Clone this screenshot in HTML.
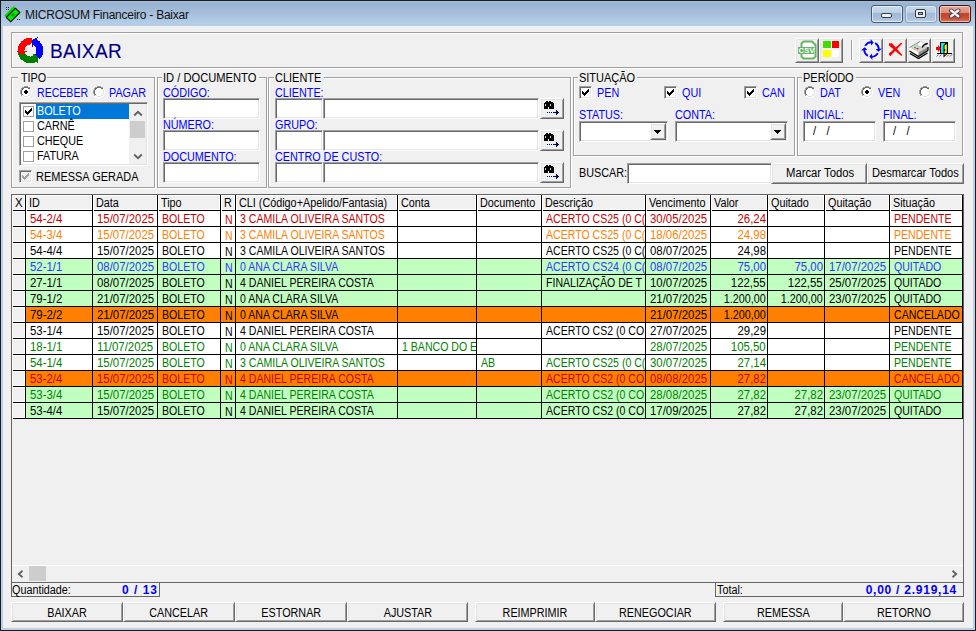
<!DOCTYPE html><html><head><meta charset="utf-8"><style>
*{box-sizing:border-box}
html,body{margin:0;padding:0}
body{width:976px;height:631px;overflow:hidden;position:relative;background:#f0f0f0;font-family:"Liberation Sans",sans-serif;font-size:11px;color:#000}
.a{position:absolute}
.t{position:absolute;white-space:nowrap;line-height:13px;font-size:12px}
.bl{color:#0000ff}
</style></head><body>
<div class="a " style="left:0px;top:0px;width:976px;height:631px;background:#b9d1ea;border:1px solid #1c1c1c"></div>
<div class="a " style="left:1px;top:1px;width:974px;height:25px;background:linear-gradient(to bottom,#a7bedb 0px,#99b4d3 2px,#9cb6d5 6px,#b9d1ea 25px)"></div>
<div class="a " style="left:3px;top:26px;width:970px;height:602px;background:#f0f0f0"></div>
<svg class="a" style="left:4px;top:5px" width="17" height="18" viewBox="0 0 17 18">
<g transform="rotate(-45 9 9.5)"><rect x="2.2" y="4.2" width="13" height="3" fill="#00c800"/><rect x="2.2" y="6.8" width="13" height="6.2" fill="#00ee00" stroke="#000" stroke-width="1.1"/>
<rect x="7" y="8.6" width="3.5" height="2.6" fill="#00a000"/><path d="M2.2 4.6 H15.2" stroke="#00ff00" stroke-width="0.8"/></g>
<rect x="2" y="2" width="1" height="1" fill="#222"/><rect x="4" y="2" width="1" height="1" fill="#222"/><rect x="2" y="4" width="1" height="1" fill="#222"/><rect x="4" y="4" width="1" height="1" fill="#222"/>
<rect x="13" y="14" width="1" height="1" fill="#222"/><rect x="15" y="14" width="1" height="1" fill="#222"/>
</svg>
<div class="t" style="left:25px;top:7px;font-size:12px;line-height:16px;color:#111;letter-spacing:-0.25px">MICROSUM Financeiro - Baixar</div>
<div class="a" style="left:871px;top:5px;width:32px;height:18px;border:1px solid #4b5a6e;border-radius:3px;background:linear-gradient(to bottom,#cadcee 0%,#bcd1e8 40%,#9fb7d2 45%,#a9c1dc 80%,#bcd3ea 100%);box-shadow:inset 0 0 0 1px rgba(255,255,255,0.55)"></div>
<div class="a" style="left:881px;top:13px;width:11px;height:5px;border:1px solid #333c48;border-radius:2px;background:#f4f4f4"></div>
<div class="a" style="left:905px;top:5px;width:32px;height:18px;border:1px solid #8aa0bb;border-radius:3px;background:linear-gradient(to bottom,#c5d8ec 0%,#bad0e8 40%,#a2bad5 45%,#adc4de 80%,#bdd3ea 100%);box-shadow:inset 0 0 0 1px rgba(255,255,255,0.45)"></div>
<div class="a" style="left:915px;top:9px;width:11px;height:9px;border:1px solid #333c48;border-radius:2px;background:#eeeeee"></div>
<div class="a" style="left:918px;top:12px;width:5px;height:3px;border:1px solid #333c48;background:#9fb7d4"></div>
<div class="a" style="left:939px;top:5px;width:32px;height:18px;border:1px solid #4a1414;border-radius:3px;background:linear-gradient(to bottom,#e9a899 0%,#dc8c7c 42%,#c0442c 47%,#c54f36 75%,#d87a62 100%);box-shadow:inset 0 0 0 1px rgba(255,230,220,0.6)"></div>
<svg class="a" style="left:948px;top:8px" width="14" height="11" viewBox="0 0 14 11"><path d="M3.2 2.6 L10.3 8.2 M10.3 2.6 L3.2 8.2" stroke="#3a3a4a" stroke-width="4.2" stroke-linecap="round"/><path d="M3.2 2.6 L10.3 8.2 M10.3 2.6 L3.2 8.2" stroke="#f2f2f2" stroke-width="2.5" stroke-linecap="round"/></svg>

<div class="a " style="left:12px;top:33px;width:952px;height:36px;border:1px solid #fff"></div>
<div class="a " style="left:11px;top:32px;width:952px;height:36px;border:1px solid #a0a0a0"></div>
<svg class="a" style="left:14px;top:34px" width="32" height="32" viewBox="14 34 32 32" shape-rendering="crispEdges"><path d="M17.7 50.5 A12.8 12.8 0 0 0 36.9 61.59 L33.5 55.7 A6.0 6.0 0 0 1 24.5 50.5 Z" fill="#008000"/><polygon points="32.25,53.53 38.25,63.92 38.56,55.53" fill="#008000"/><path d="M40.01 59.06 A12.8 12.8 0 0 0 36.9 39.41 L33.5 45.3 A6.0 6.0 0 0 1 34.96 54.51 Z" fill="#0000ff"/><polygon points="32.5,47.04 38.25,37.08 30.84,40.76" fill="#0000ff"/><path d="M32.28 37.82 A12.8 12.8 0 0 0 17.7 50.5 L24.5 50.5 A6.0 6.0 0 0 1 31.34 44.56 Z" fill="#ff0000"/><polygon points="28.0,50.5 14.7,50.5 22.35,54.65" fill="#ff0000"/></svg>
<div class="t" style="left:50px;top:39px;font-size:19.5px;line-height:24px;color:#000080;-webkit-text-stroke:0.1px #000080;letter-spacing:0.4px;transform:scaleX(0.975);transform-origin:0 0">BAIXAR</div>
<div class="a " style="left:795px;top:38px;width:24px;height:25px;background:#f0f0f0;border-style:solid;border-width:1px;border-color:#fff #696969 #696969 #fff;box-shadow:inset 1px 1px 0 #e3e3e3, inset -1px -1px 0 #a0a0a0;"><svg class="a" style="left:-1px;top:-1px" width="24" height="24" viewBox="0 0 24 24"><path d="M8.5 3.5 H17 L20.5 7 V18.5 L18.5 20.5 H8.5 L6.5 18.5 V5.5 Z" fill="#fff" stroke="#66b666" stroke-width="2"/><rect x="3" y="9" width="16" height="7" fill="#66b666"/><text x="3.6" y="15" font-family="Liberation Sans" font-weight="bold" font-size="7.6" fill="#fff" letter-spacing="0.2">CSV</text></svg></div>
<div class="a " style="left:819px;top:38px;width:24px;height:25px;background:#f0f0f0;border-style:solid;border-width:1px;border-color:#fff #696969 #696969 #fff;box-shadow:inset 1px 1px 0 #e3e3e3, inset -1px -1px 0 #a0a0a0;"><div class="a" style="left:3px;top:2px;width:8px;height:7px;background:#44dd00"></div><div class="a" style="left:12px;top:2px;width:7px;height:7px;background:#ff0000"></div><div class="a" style="left:3px;top:11px;width:8px;height:7px;background:#ffff00"></div><div class="a" style="left:12px;top:11px;width:7px;height:7px;background:#fff"></div></div>
<div class="a " style="left:851px;top:40px;width:1px;height:20px;background:#a0a0a0"></div>
<div class="a " style="left:852px;top:40px;width:1px;height:20px;background:#fff"></div>
<div class="a " style="left:859px;top:38px;width:24px;height:25px;background:#f0f0f0;border-style:solid;border-width:1px;border-color:#fff #696969 #696969 #fff;box-shadow:inset 1px 1px 0 #e3e3e3, inset -1px -1px 0 #a0a0a0;"><svg class="a" style="left:-1px;top:-1px" width="24" height="24" viewBox="0 0 24 24"><path d="M6.18 7.85 A7.3 7.3 0 0 1 12.25 4.2" fill="none" stroke="#0000ff" stroke-width="1.9"/><polygon points="12.14,7.42 11.58,1.04 14.63,4.52" fill="#0000ff"/><path d="M16.15 5.18 A7.3 7.3 0 0 1 19.8 11.25" fill="none" stroke="#0000ff" stroke-width="1.9"/><polygon points="16.58,11.14 22.96,10.58 19.48,13.63" fill="#0000ff"/><path d="M18.82 15.15 A7.3 7.3 0 0 1 12.75 18.8" fill="none" stroke="#0000ff" stroke-width="1.9"/><polygon points="12.86,15.58 13.42,21.96 10.37,18.48" fill="#0000ff"/><path d="M8.85 17.82 A7.3 7.3 0 0 1 5.2 11.75" fill="none" stroke="#0000ff" stroke-width="1.9"/><polygon points="8.42,11.86 2.04,12.42 5.52,9.37" fill="#0000ff"/></svg></div>
<div class="a " style="left:883px;top:38px;width:24px;height:25px;background:#f0f0f0;border-style:solid;border-width:1px;border-color:#fff #696969 #696969 #fff;box-shadow:inset 1px 1px 0 #e3e3e3, inset -1px -1px 0 #a0a0a0;"><svg class="a" style="left:-1px;top:-1px" width="24" height="24" viewBox="0 0 24 24"><polygon points="6,5.2 9,5.2 19.3,16.9 18.3,18 6,7.6" fill="#ff0000"/><polygon points="18,4.8 19.4,5.6 9.2,16 7.3,18.2 5.8,16.6 6,15.4" fill="#ff0000"/></svg></div>
<div class="a " style="left:907px;top:38px;width:24px;height:25px;background:#f0f0f0;border-style:solid;border-width:1px;border-color:#fff #696969 #696969 #fff;box-shadow:inset 1px 1px 0 #e3e3e3, inset -1px -1px 0 #a0a0a0;"><svg class="a" style="left:-1px;top:-1px" width="24" height="24" viewBox="0 0 24 24"><polygon points="2.5,9.5 13,3.5 21,9 11.5,14.5" fill="#cfcfcf"/><polygon points="2.5,9.5 11.5,14.5 11.5,17.5 2.5,12.5" fill="#ffffff"/><polygon points="11.5,14.5 21,9 21,12.5 11.5,18" fill="#8c8c8c"/><polygon points="10.5,5.5 13.5,3.2 18,5.5 15,9.5 10.5,7.5" fill="#fff" stroke="#b0b0b0" stroke-width="0.6"/><path d="M2.5 9.5 L13 3.5" stroke="#9a9a9a" stroke-width="1"/><path d="M15.2 9.5 Q16.5 6 20.8 5.5" fill="none" stroke="#000" stroke-width="1.3"/><path d="M2.5 13 L11.5 18.5 L21 12.5" fill="none" stroke="#000" stroke-width="1.4"/><path d="M3 15.5 L11.5 20.5 L20.5 15" fill="none" stroke="#000" stroke-width="1.4"/><path d="M21 9 L21 12.5" stroke="#000" stroke-width="1.2"/><rect x="7" y="9" width="2" height="1.2" fill="#00dd00"/><rect x="9.5" y="10" width="2" height="1.2" fill="#ee0000"/></svg></div>
<div class="a " style="left:931px;top:38px;width:24px;height:25px;background:#f0f0f0;border-style:solid;border-width:1px;border-color:#fff #696969 #696969 #fff;box-shadow:inset 1px 1px 0 #e3e3e3, inset -1px -1px 0 #a0a0a0;"><svg class="a" style="left:0px;top:-1px" width="24" height="24" viewBox="0 0 24 24"><rect x="8" y="4" width="8" height="12" fill="#000"/><rect x="9" y="5" width="4" height="10" fill="#00f0f0"/><polygon points="11.5,7 15.8,4.2 15.8,15.5 11.5,19.5" fill="#000"/><polygon points="12.5,7.6 14.8,6 14.8,15 12.5,17.6" fill="#ffff00"/><rect x="12" y="11" width="1.2" height="2" fill="#000"/><polygon points="4,9 6,9 6,7 9.3,10.5 6,14 6,12 4,12" fill="#ff0000"/><rect x="5" y="15" width="15" height="1" fill="#000"/><g stroke="#505050" stroke-width="0.9"><path d="M4.5 18.5 L6.5 16.5 M7.5 18.5 L9.5 16.5 M15 18.5 L17 16.5 M18 18.5 L20 16.5"/></g></svg></div>
<div class="a " style="left:12px;top:78px;width:144px;height:111px;border:1px solid #fff"></div>
<div class="a " style="left:11px;top:77px;width:144px;height:111px;border:1px solid #a0a0a0"></div>
<div class="a " style="left:18px;top:76px;width:29px;height:4px;background:#f0f0f0"></div>
<div class="t" style="left:21px;top:72px;transform:scaleX(0.9);transform-origin:0 0;">TIPO</div>
<svg class="a" style="left:20px;top:86px" width="12" height="12" viewBox="0 0 12 12" shape-rendering="crispEdges"><rect x="2" y="2" width="8" height="8" fill="#fff"/><rect x="4" y="1" width="4" height="10" fill="#fff"/><rect x="1" y="4" width="10" height="4" fill="#fff"/><rect x="4" y="0" width="1" height="1" fill="#a0a0a0"/><rect x="5" y="0" width="1" height="1" fill="#a0a0a0"/><rect x="6" y="0" width="1" height="1" fill="#a0a0a0"/><rect x="7" y="0" width="1" height="1" fill="#a0a0a0"/><rect x="2" y="1" width="1" height="1" fill="#a0a0a0"/><rect x="3" y="1" width="1" height="1" fill="#a0a0a0"/><rect x="4" y="1" width="1" height="1" fill="#696969"/><rect x="5" y="1" width="1" height="1" fill="#696969"/><rect x="6" y="1" width="1" height="1" fill="#696969"/><rect x="7" y="1" width="1" height="1" fill="#696969"/><rect x="8" y="1" width="1" height="1" fill="#a0a0a0"/><rect x="9" y="1" width="1" height="1" fill="#a0a0a0"/><rect x="1" y="2" width="1" height="1" fill="#a0a0a0"/><rect x="2" y="2" width="1" height="1" fill="#696969"/><rect x="3" y="2" width="1" height="1" fill="#696969"/><rect x="8" y="2" width="1" height="1" fill="#696969"/><rect x="9" y="2" width="1" height="1" fill="#696969"/><rect x="10" y="2" width="1" height="1" fill="#ffffff"/><rect x="1" y="3" width="1" height="1" fill="#a0a0a0"/><rect x="2" y="3" width="1" height="1" fill="#696969"/><rect x="9" y="3" width="1" height="1" fill="#e3e3e3"/><rect x="10" y="3" width="1" height="1" fill="#ffffff"/><rect x="0" y="4" width="1" height="1" fill="#a0a0a0"/><rect x="1" y="4" width="1" height="1" fill="#696969"/><rect x="10" y="4" width="1" height="1" fill="#e3e3e3"/><rect x="11" y="4" width="1" height="1" fill="#ffffff"/><rect x="0" y="5" width="1" height="1" fill="#a0a0a0"/><rect x="1" y="5" width="1" height="1" fill="#696969"/><rect x="10" y="5" width="1" height="1" fill="#e3e3e3"/><rect x="11" y="5" width="1" height="1" fill="#ffffff"/><rect x="0" y="6" width="1" height="1" fill="#a0a0a0"/><rect x="1" y="6" width="1" height="1" fill="#696969"/><rect x="10" y="6" width="1" height="1" fill="#e3e3e3"/><rect x="11" y="6" width="1" height="1" fill="#ffffff"/><rect x="0" y="7" width="1" height="1" fill="#a0a0a0"/><rect x="1" y="7" width="1" height="1" fill="#696969"/><rect x="10" y="7" width="1" height="1" fill="#e3e3e3"/><rect x="11" y="7" width="1" height="1" fill="#ffffff"/><rect x="1" y="8" width="1" height="1" fill="#a0a0a0"/><rect x="2" y="8" width="1" height="1" fill="#696969"/><rect x="9" y="8" width="1" height="1" fill="#e3e3e3"/><rect x="10" y="8" width="1" height="1" fill="#ffffff"/><rect x="1" y="9" width="1" height="1" fill="#a0a0a0"/><rect x="2" y="9" width="1" height="1" fill="#e3e3e3"/><rect x="3" y="9" width="1" height="1" fill="#e3e3e3"/><rect x="8" y="9" width="1" height="1" fill="#e3e3e3"/><rect x="9" y="9" width="1" height="1" fill="#e3e3e3"/><rect x="10" y="9" width="1" height="1" fill="#ffffff"/><rect x="2" y="10" width="1" height="1" fill="#ffffff"/><rect x="3" y="10" width="1" height="1" fill="#ffffff"/><rect x="4" y="10" width="1" height="1" fill="#e3e3e3"/><rect x="5" y="10" width="1" height="1" fill="#e3e3e3"/><rect x="6" y="10" width="1" height="1" fill="#e3e3e3"/><rect x="7" y="10" width="1" height="1" fill="#e3e3e3"/><rect x="8" y="10" width="1" height="1" fill="#ffffff"/><rect x="9" y="10" width="1" height="1" fill="#ffffff"/><rect x="4" y="11" width="1" height="1" fill="#ffffff"/><rect x="5" y="11" width="1" height="1" fill="#ffffff"/><rect x="6" y="11" width="1" height="1" fill="#ffffff"/><rect x="7" y="11" width="1" height="1" fill="#ffffff"/><rect x="5" y="4" width="2" height="4" fill="#000"/><rect x="4" y="5" width="4" height="2" fill="#000"/></svg>
<div class="t" style="left:37px;top:87px;transform:scaleX(0.88);transform-origin:0 0;color:#0000ff">RECEBER</div>
<svg class="a" style="left:93px;top:86px" width="12" height="12" viewBox="0 0 12 12" shape-rendering="crispEdges"><rect x="2" y="2" width="8" height="8" fill="#fff"/><rect x="4" y="1" width="4" height="10" fill="#fff"/><rect x="1" y="4" width="10" height="4" fill="#fff"/><rect x="4" y="0" width="1" height="1" fill="#a0a0a0"/><rect x="5" y="0" width="1" height="1" fill="#a0a0a0"/><rect x="6" y="0" width="1" height="1" fill="#a0a0a0"/><rect x="7" y="0" width="1" height="1" fill="#a0a0a0"/><rect x="2" y="1" width="1" height="1" fill="#a0a0a0"/><rect x="3" y="1" width="1" height="1" fill="#a0a0a0"/><rect x="4" y="1" width="1" height="1" fill="#696969"/><rect x="5" y="1" width="1" height="1" fill="#696969"/><rect x="6" y="1" width="1" height="1" fill="#696969"/><rect x="7" y="1" width="1" height="1" fill="#696969"/><rect x="8" y="1" width="1" height="1" fill="#a0a0a0"/><rect x="9" y="1" width="1" height="1" fill="#a0a0a0"/><rect x="1" y="2" width="1" height="1" fill="#a0a0a0"/><rect x="2" y="2" width="1" height="1" fill="#696969"/><rect x="3" y="2" width="1" height="1" fill="#696969"/><rect x="8" y="2" width="1" height="1" fill="#696969"/><rect x="9" y="2" width="1" height="1" fill="#696969"/><rect x="10" y="2" width="1" height="1" fill="#ffffff"/><rect x="1" y="3" width="1" height="1" fill="#a0a0a0"/><rect x="2" y="3" width="1" height="1" fill="#696969"/><rect x="9" y="3" width="1" height="1" fill="#e3e3e3"/><rect x="10" y="3" width="1" height="1" fill="#ffffff"/><rect x="0" y="4" width="1" height="1" fill="#a0a0a0"/><rect x="1" y="4" width="1" height="1" fill="#696969"/><rect x="10" y="4" width="1" height="1" fill="#e3e3e3"/><rect x="11" y="4" width="1" height="1" fill="#ffffff"/><rect x="0" y="5" width="1" height="1" fill="#a0a0a0"/><rect x="1" y="5" width="1" height="1" fill="#696969"/><rect x="10" y="5" width="1" height="1" fill="#e3e3e3"/><rect x="11" y="5" width="1" height="1" fill="#ffffff"/><rect x="0" y="6" width="1" height="1" fill="#a0a0a0"/><rect x="1" y="6" width="1" height="1" fill="#696969"/><rect x="10" y="6" width="1" height="1" fill="#e3e3e3"/><rect x="11" y="6" width="1" height="1" fill="#ffffff"/><rect x="0" y="7" width="1" height="1" fill="#a0a0a0"/><rect x="1" y="7" width="1" height="1" fill="#696969"/><rect x="10" y="7" width="1" height="1" fill="#e3e3e3"/><rect x="11" y="7" width="1" height="1" fill="#ffffff"/><rect x="1" y="8" width="1" height="1" fill="#a0a0a0"/><rect x="2" y="8" width="1" height="1" fill="#696969"/><rect x="9" y="8" width="1" height="1" fill="#e3e3e3"/><rect x="10" y="8" width="1" height="1" fill="#ffffff"/><rect x="1" y="9" width="1" height="1" fill="#a0a0a0"/><rect x="2" y="9" width="1" height="1" fill="#e3e3e3"/><rect x="3" y="9" width="1" height="1" fill="#e3e3e3"/><rect x="8" y="9" width="1" height="1" fill="#e3e3e3"/><rect x="9" y="9" width="1" height="1" fill="#e3e3e3"/><rect x="10" y="9" width="1" height="1" fill="#ffffff"/><rect x="2" y="10" width="1" height="1" fill="#ffffff"/><rect x="3" y="10" width="1" height="1" fill="#ffffff"/><rect x="4" y="10" width="1" height="1" fill="#e3e3e3"/><rect x="5" y="10" width="1" height="1" fill="#e3e3e3"/><rect x="6" y="10" width="1" height="1" fill="#e3e3e3"/><rect x="7" y="10" width="1" height="1" fill="#e3e3e3"/><rect x="8" y="10" width="1" height="1" fill="#ffffff"/><rect x="9" y="10" width="1" height="1" fill="#ffffff"/><rect x="4" y="11" width="1" height="1" fill="#ffffff"/><rect x="5" y="11" width="1" height="1" fill="#ffffff"/><rect x="6" y="11" width="1" height="1" fill="#ffffff"/><rect x="7" y="11" width="1" height="1" fill="#ffffff"/></svg>
<div class="t" style="left:109px;top:87px;transform:scaleX(0.9);transform-origin:0 0;color:#0000ff">PAGAR</div>
<div class="a " style="left:19px;top:102px;width:129px;height:64px;background:#fff;border-style:solid;border-width:1px;border-color:#a0a0a0 #fff #fff #a0a0a0;box-shadow:inset 1px 1px 0 #696969, inset -1px -1px 0 #e3e3e3"></div>
<div class="a " style="left:36px;top:104px;width:93px;height:15px;background:#0078d7"></div>
<div class="a " style="left:23px;top:106px;width:11px;height:11px;border:1px solid #a0a0a0;background:#fff"></div>
<svg class="a" style="left:25px;top:108px" width="7" height="7" viewBox="0 0 7 7" fill="#000" shape-rendering="crispEdges"><rect x="6" y="0" width="1" height="1"/><rect x="5" y="1" width="1" height="1"/><rect x="6" y="1" width="1" height="1"/><rect x="0" y="2" width="1" height="1"/><rect x="4" y="2" width="1" height="1"/><rect x="5" y="2" width="1" height="1"/><rect x="6" y="2" width="1" height="1"/><rect x="0" y="3" width="1" height="1"/><rect x="1" y="3" width="1" height="1"/><rect x="3" y="3" width="1" height="1"/><rect x="4" y="3" width="1" height="1"/><rect x="5" y="3" width="1" height="1"/><rect x="0" y="4" width="1" height="1"/><rect x="1" y="4" width="1" height="1"/><rect x="2" y="4" width="1" height="1"/><rect x="3" y="4" width="1" height="1"/><rect x="4" y="4" width="1" height="1"/><rect x="1" y="5" width="1" height="1"/><rect x="2" y="5" width="1" height="1"/><rect x="3" y="5" width="1" height="1"/><rect x="2" y="6" width="1" height="1"/></svg>
<div class="t" style="left:37px;top:105px;transform:scaleX(0.9);transform-origin:0 0;color:#fff">BOLETO</div>
<div class="a " style="left:23px;top:121px;width:11px;height:11px;border:1px solid #a0a0a0;background:#fff"></div>
<div class="t" style="left:37px;top:120px;transform:scaleX(0.9);transform-origin:0 0;color:#000">CARNÊ</div>
<div class="a " style="left:23px;top:136px;width:11px;height:11px;border:1px solid #a0a0a0;background:#fff"></div>
<div class="t" style="left:37px;top:135px;transform:scaleX(0.9);transform-origin:0 0;color:#000">CHEQUE</div>
<div class="a " style="left:23px;top:151px;width:11px;height:11px;border:1px solid #a0a0a0;background:#fff"></div>
<div class="t" style="left:37px;top:150px;transform:scaleX(0.9);transform-origin:0 0;color:#000">FATURA</div>
<div class="a " style="left:129px;top:104px;width:17px;height:60px;background:#f0f0f0"></div>
<div class="a " style="left:130px;top:121px;width:15px;height:17px;background:#cdcdcd"></div>
<svg class="a" style="left:133px;top:110px" width="10" height="7" viewBox="0 0 10 7"><path d="M1.2 5.5 L5 1.8 L8.8 5.5" fill="none" stroke="#606060" stroke-width="1.8"/></svg>
<svg class="a" style="left:133px;top:153px" width="10" height="7" viewBox="0 0 10 7"><path d="M1.2 1.5 L5 5.2 L8.8 1.5" fill="none" stroke="#606060" stroke-width="1.8"/></svg>
<div class="a " style="left:19px;top:170px;width:13px;height:13px;border-style:solid;border-width:1px;border-color:#a0a0a0 #fff #fff #a0a0a0;box-shadow:inset 1px 1px 0 #696969, inset -1px -1px 0 #e3e3e3;background:#f0f0f0"></div>
<svg class="a" style="left:22px;top:173px" width="7" height="7" viewBox="0 0 7 7" fill="#a0a0a0" shape-rendering="crispEdges"><rect x="6" y="0" width="1" height="1"/><rect x="5" y="1" width="1" height="1"/><rect x="6" y="1" width="1" height="1"/><rect x="0" y="2" width="1" height="1"/><rect x="4" y="2" width="1" height="1"/><rect x="5" y="2" width="1" height="1"/><rect x="6" y="2" width="1" height="1"/><rect x="0" y="3" width="1" height="1"/><rect x="1" y="3" width="1" height="1"/><rect x="3" y="3" width="1" height="1"/><rect x="4" y="3" width="1" height="1"/><rect x="5" y="3" width="1" height="1"/><rect x="0" y="4" width="1" height="1"/><rect x="1" y="4" width="1" height="1"/><rect x="2" y="4" width="1" height="1"/><rect x="3" y="4" width="1" height="1"/><rect x="4" y="4" width="1" height="1"/><rect x="1" y="5" width="1" height="1"/><rect x="2" y="5" width="1" height="1"/><rect x="3" y="5" width="1" height="1"/><rect x="2" y="6" width="1" height="1"/></svg>
<div class="t" style="left:36px;top:171px;transform:scaleX(0.915);transform-origin:0 0;">REMESSA GERADA</div>
<div class="a " style="left:158px;top:78px;width:110px;height:111px;border:1px solid #fff"></div>
<div class="a " style="left:157px;top:77px;width:110px;height:111px;border:1px solid #a0a0a0"></div>
<div class="a " style="left:162px;top:76px;width:97px;height:4px;background:#f0f0f0"></div>
<div class="t" style="left:163px;top:72px;transform:scaleX(0.93);transform-origin:0 0;">ID / DOCUMENTO</div>
<div class="t" style="left:163px;top:87px;transform:scaleX(0.9);transform-origin:0 0;color:#0000ff">CÓDIGO:</div>
<div class="a " style="left:163px;top:98px;width:97px;height:21px;background:#fff;border-style:solid;border-width:1px;border-color:#a0a0a0 #fff #fff #a0a0a0;box-shadow:inset 1px 1px 0 #696969, inset -1px -1px 0 #e3e3e3"></div>
<div class="t" style="left:163px;top:119px;transform:scaleX(0.9);transform-origin:0 0;color:#0000ff">NÚMERO:</div>
<div class="a " style="left:163px;top:130px;width:97px;height:21px;background:#fff;border-style:solid;border-width:1px;border-color:#a0a0a0 #fff #fff #a0a0a0;box-shadow:inset 1px 1px 0 #696969, inset -1px -1px 0 #e3e3e3"></div>
<div class="t" style="left:163px;top:151px;transform:scaleX(0.9);transform-origin:0 0;color:#0000ff">DOCUMENTO:</div>
<div class="a " style="left:163px;top:162px;width:97px;height:21px;background:#fff;border-style:solid;border-width:1px;border-color:#a0a0a0 #fff #fff #a0a0a0;box-shadow:inset 1px 1px 0 #696969, inset -1px -1px 0 #e3e3e3"></div>
<div class="a " style="left:269px;top:78px;width:303px;height:111px;border:1px solid #fff"></div>
<div class="a " style="left:268px;top:77px;width:303px;height:111px;border:1px solid #a0a0a0"></div>
<div class="a " style="left:274px;top:76px;width:50px;height:4px;background:#f0f0f0"></div>
<div class="t" style="left:275px;top:72px;transform:scaleX(0.915);transform-origin:0 0;">CLIENTE</div>
<div class="t" style="left:275px;top:87px;transform:scaleX(0.9);transform-origin:0 0;color:#0000ff">CLIENTE:</div>
<div class="a " style="left:275px;top:98px;width:48px;height:21px;background:#fff;border-style:solid;border-width:1px;border-color:#a0a0a0 #fff #fff #a0a0a0;box-shadow:inset 1px 1px 0 #696969, inset -1px -1px 0 #e3e3e3"></div>
<div class="a " style="left:323px;top:98px;width:216px;height:21px;background:#fff;border-style:solid;border-width:1px;border-color:#a0a0a0 #fff #fff #a0a0a0;box-shadow:inset 1px 1px 0 #696969, inset -1px -1px 0 #e3e3e3"></div>
<div class="a " style="left:540px;top:98px;width:24px;height:21px;background:#f0f0f0;border-style:solid;border-width:1px;border-color:#fff #696969 #696969 #fff;box-shadow:inset 1px 1px 0 #e3e3e3, inset -1px -1px 0 #a0a0a0;"><svg class="a" style="left:-1px;top:-1px" width="24" height="21" viewBox="0 0 24 21" shape-rendering="crispEdges"><rect x="6" y="3" width="1" height="1" fill="#000"/><rect x="7" y="3" width="1" height="1" fill="#000"/><rect x="9" y="3" width="1" height="1" fill="#000"/><rect x="10" y="3" width="1" height="1" fill="#000"/><rect x="5" y="4" width="1" height="1" fill="#000"/><rect x="6" y="4" width="1" height="1" fill="#000"/><rect x="7" y="4" width="1" height="1" fill="#000"/><rect x="8" y="4" width="1" height="1" fill="#000"/><rect x="9" y="4" width="1" height="1" fill="#000"/><rect x="10" y="4" width="1" height="1" fill="#000"/><rect x="11" y="4" width="1" height="1" fill="#000"/><rect x="12" y="4" width="1" height="1" fill="#000"/><rect x="4" y="5" width="1" height="1" fill="#000"/><rect x="5" y="5" width="1" height="1" fill="#000"/><rect x="6" y="5" width="1" height="1" fill="#000"/><rect x="7" y="5" width="1" height="1" fill="#000"/><rect x="8" y="5" width="1" height="1" fill="#000"/><rect x="9" y="5" width="1" height="1" fill="#000"/><rect x="10" y="5" width="1" height="1" fill="#000"/><rect x="11" y="5" width="1" height="1" fill="#000"/><rect x="12" y="5" width="1" height="1" fill="#000"/><rect x="13" y="5" width="1" height="1" fill="#000"/><rect x="4" y="6" width="1" height="1" fill="#000"/><rect x="5" y="6" width="1" height="1" fill="#d0d0d0"/><rect x="6" y="6" width="1" height="1" fill="#000"/><rect x="7" y="6" width="1" height="1" fill="#000"/><rect x="8" y="6" width="1" height="1" fill="#000"/><rect x="9" y="6" width="1" height="1" fill="#000"/><rect x="10" y="6" width="1" height="1" fill="#d0d0d0"/><rect x="11" y="6" width="1" height="1" fill="#000"/><rect x="12" y="6" width="1" height="1" fill="#000"/><rect x="13" y="6" width="1" height="1" fill="#000"/><rect x="4" y="7" width="1" height="1" fill="#000"/><rect x="5" y="7" width="1" height="1" fill="#d0d0d0"/><rect x="6" y="7" width="1" height="1" fill="#000"/><rect x="7" y="7" width="1" height="1" fill="#000"/><rect x="8" y="7" width="1" height="1" fill="#000"/><rect x="9" y="7" width="1" height="1" fill="#000"/><rect x="10" y="7" width="1" height="1" fill="#d0d0d0"/><rect x="11" y="7" width="1" height="1" fill="#000"/><rect x="12" y="7" width="1" height="1" fill="#000"/><rect x="13" y="7" width="1" height="1" fill="#000"/><rect x="4" y="8" width="1" height="1" fill="#000"/><rect x="5" y="8" width="1" height="1" fill="#000"/><rect x="6" y="8" width="1" height="1" fill="#000"/><rect x="7" y="8" width="1" height="1" fill="#000"/><rect x="8" y="8" width="1" height="1" fill="#000"/><rect x="9" y="8" width="1" height="1" fill="#000"/><rect x="10" y="8" width="1" height="1" fill="#000"/><rect x="11" y="8" width="1" height="1" fill="#000"/><rect x="12" y="8" width="1" height="1" fill="#000"/><rect x="13" y="8" width="1" height="1" fill="#000"/><rect x="4" y="9" width="1" height="1" fill="#000"/><rect x="5" y="9" width="1" height="1" fill="#000"/><rect x="6" y="9" width="1" height="1" fill="#000"/><rect x="7" y="9" width="1" height="1" fill="#000"/><rect x="9" y="9" width="1" height="1" fill="#000"/><rect x="10" y="9" width="1" height="1" fill="#000"/><rect x="11" y="9" width="1" height="1" fill="#000"/><rect x="12" y="9" width="1" height="1" fill="#000"/><rect x="13" y="9" width="1" height="1" fill="#000"/><rect x="4" y="10" width="1" height="1" fill="#000"/><rect x="5" y="10" width="1" height="1" fill="#000"/><rect x="6" y="10" width="1" height="1" fill="#000"/><rect x="7" y="10" width="1" height="1" fill="#000"/><rect x="9" y="10" width="1" height="1" fill="#000"/><rect x="10" y="10" width="1" height="1" fill="#000"/><rect x="11" y="10" width="1" height="1" fill="#000"/><rect x="12" y="10" width="1" height="1" fill="#000"/><rect x="13" y="10" width="1" height="1" fill="#000"/><g fill="#000080"><rect x="7" y="14" width="1" height="1"/><rect x="9" y="14" width="1" height="1"/><rect x="11" y="14" width="1" height="1"/><rect x="13" y="14" width="5" height="1"/><rect x="16" y="12" width="1" height="5"/><rect x="17" y="13" width="1" height="3"/><rect x="18" y="14" width="1" height="1"/></g></svg></div>
<div class="t" style="left:275px;top:119px;transform:scaleX(0.9);transform-origin:0 0;color:#0000ff">GRUPO:</div>
<div class="a " style="left:275px;top:130px;width:48px;height:21px;background:#fff;border-style:solid;border-width:1px;border-color:#a0a0a0 #fff #fff #a0a0a0;box-shadow:inset 1px 1px 0 #696969, inset -1px -1px 0 #e3e3e3"></div>
<div class="a " style="left:323px;top:130px;width:216px;height:21px;background:#fff;border-style:solid;border-width:1px;border-color:#a0a0a0 #fff #fff #a0a0a0;box-shadow:inset 1px 1px 0 #696969, inset -1px -1px 0 #e3e3e3"></div>
<div class="a " style="left:540px;top:130px;width:24px;height:21px;background:#f0f0f0;border-style:solid;border-width:1px;border-color:#fff #696969 #696969 #fff;box-shadow:inset 1px 1px 0 #e3e3e3, inset -1px -1px 0 #a0a0a0;"><svg class="a" style="left:-1px;top:-1px" width="24" height="21" viewBox="0 0 24 21" shape-rendering="crispEdges"><rect x="6" y="3" width="1" height="1" fill="#000"/><rect x="7" y="3" width="1" height="1" fill="#000"/><rect x="9" y="3" width="1" height="1" fill="#000"/><rect x="10" y="3" width="1" height="1" fill="#000"/><rect x="5" y="4" width="1" height="1" fill="#000"/><rect x="6" y="4" width="1" height="1" fill="#000"/><rect x="7" y="4" width="1" height="1" fill="#000"/><rect x="8" y="4" width="1" height="1" fill="#000"/><rect x="9" y="4" width="1" height="1" fill="#000"/><rect x="10" y="4" width="1" height="1" fill="#000"/><rect x="11" y="4" width="1" height="1" fill="#000"/><rect x="12" y="4" width="1" height="1" fill="#000"/><rect x="4" y="5" width="1" height="1" fill="#000"/><rect x="5" y="5" width="1" height="1" fill="#000"/><rect x="6" y="5" width="1" height="1" fill="#000"/><rect x="7" y="5" width="1" height="1" fill="#000"/><rect x="8" y="5" width="1" height="1" fill="#000"/><rect x="9" y="5" width="1" height="1" fill="#000"/><rect x="10" y="5" width="1" height="1" fill="#000"/><rect x="11" y="5" width="1" height="1" fill="#000"/><rect x="12" y="5" width="1" height="1" fill="#000"/><rect x="13" y="5" width="1" height="1" fill="#000"/><rect x="4" y="6" width="1" height="1" fill="#000"/><rect x="5" y="6" width="1" height="1" fill="#d0d0d0"/><rect x="6" y="6" width="1" height="1" fill="#000"/><rect x="7" y="6" width="1" height="1" fill="#000"/><rect x="8" y="6" width="1" height="1" fill="#000"/><rect x="9" y="6" width="1" height="1" fill="#000"/><rect x="10" y="6" width="1" height="1" fill="#d0d0d0"/><rect x="11" y="6" width="1" height="1" fill="#000"/><rect x="12" y="6" width="1" height="1" fill="#000"/><rect x="13" y="6" width="1" height="1" fill="#000"/><rect x="4" y="7" width="1" height="1" fill="#000"/><rect x="5" y="7" width="1" height="1" fill="#d0d0d0"/><rect x="6" y="7" width="1" height="1" fill="#000"/><rect x="7" y="7" width="1" height="1" fill="#000"/><rect x="8" y="7" width="1" height="1" fill="#000"/><rect x="9" y="7" width="1" height="1" fill="#000"/><rect x="10" y="7" width="1" height="1" fill="#d0d0d0"/><rect x="11" y="7" width="1" height="1" fill="#000"/><rect x="12" y="7" width="1" height="1" fill="#000"/><rect x="13" y="7" width="1" height="1" fill="#000"/><rect x="4" y="8" width="1" height="1" fill="#000"/><rect x="5" y="8" width="1" height="1" fill="#000"/><rect x="6" y="8" width="1" height="1" fill="#000"/><rect x="7" y="8" width="1" height="1" fill="#000"/><rect x="8" y="8" width="1" height="1" fill="#000"/><rect x="9" y="8" width="1" height="1" fill="#000"/><rect x="10" y="8" width="1" height="1" fill="#000"/><rect x="11" y="8" width="1" height="1" fill="#000"/><rect x="12" y="8" width="1" height="1" fill="#000"/><rect x="13" y="8" width="1" height="1" fill="#000"/><rect x="4" y="9" width="1" height="1" fill="#000"/><rect x="5" y="9" width="1" height="1" fill="#000"/><rect x="6" y="9" width="1" height="1" fill="#000"/><rect x="7" y="9" width="1" height="1" fill="#000"/><rect x="9" y="9" width="1" height="1" fill="#000"/><rect x="10" y="9" width="1" height="1" fill="#000"/><rect x="11" y="9" width="1" height="1" fill="#000"/><rect x="12" y="9" width="1" height="1" fill="#000"/><rect x="13" y="9" width="1" height="1" fill="#000"/><rect x="4" y="10" width="1" height="1" fill="#000"/><rect x="5" y="10" width="1" height="1" fill="#000"/><rect x="6" y="10" width="1" height="1" fill="#000"/><rect x="7" y="10" width="1" height="1" fill="#000"/><rect x="9" y="10" width="1" height="1" fill="#000"/><rect x="10" y="10" width="1" height="1" fill="#000"/><rect x="11" y="10" width="1" height="1" fill="#000"/><rect x="12" y="10" width="1" height="1" fill="#000"/><rect x="13" y="10" width="1" height="1" fill="#000"/><g fill="#000080"><rect x="7" y="14" width="1" height="1"/><rect x="9" y="14" width="1" height="1"/><rect x="11" y="14" width="1" height="1"/><rect x="13" y="14" width="5" height="1"/><rect x="16" y="12" width="1" height="5"/><rect x="17" y="13" width="1" height="3"/><rect x="18" y="14" width="1" height="1"/></g></svg></div>
<div class="t" style="left:275px;top:151px;transform:scaleX(0.9);transform-origin:0 0;color:#0000ff">CENTRO DE CUSTO:</div>
<div class="a " style="left:275px;top:162px;width:48px;height:21px;background:#fff;border-style:solid;border-width:1px;border-color:#a0a0a0 #fff #fff #a0a0a0;box-shadow:inset 1px 1px 0 #696969, inset -1px -1px 0 #e3e3e3"></div>
<div class="a " style="left:323px;top:162px;width:216px;height:21px;background:#fff;border-style:solid;border-width:1px;border-color:#a0a0a0 #fff #fff #a0a0a0;box-shadow:inset 1px 1px 0 #696969, inset -1px -1px 0 #e3e3e3"></div>
<div class="a " style="left:540px;top:162px;width:24px;height:21px;background:#f0f0f0;border-style:solid;border-width:1px;border-color:#fff #696969 #696969 #fff;box-shadow:inset 1px 1px 0 #e3e3e3, inset -1px -1px 0 #a0a0a0;"><svg class="a" style="left:-1px;top:-1px" width="24" height="21" viewBox="0 0 24 21" shape-rendering="crispEdges"><rect x="6" y="3" width="1" height="1" fill="#000"/><rect x="7" y="3" width="1" height="1" fill="#000"/><rect x="9" y="3" width="1" height="1" fill="#000"/><rect x="10" y="3" width="1" height="1" fill="#000"/><rect x="5" y="4" width="1" height="1" fill="#000"/><rect x="6" y="4" width="1" height="1" fill="#000"/><rect x="7" y="4" width="1" height="1" fill="#000"/><rect x="8" y="4" width="1" height="1" fill="#000"/><rect x="9" y="4" width="1" height="1" fill="#000"/><rect x="10" y="4" width="1" height="1" fill="#000"/><rect x="11" y="4" width="1" height="1" fill="#000"/><rect x="12" y="4" width="1" height="1" fill="#000"/><rect x="4" y="5" width="1" height="1" fill="#000"/><rect x="5" y="5" width="1" height="1" fill="#000"/><rect x="6" y="5" width="1" height="1" fill="#000"/><rect x="7" y="5" width="1" height="1" fill="#000"/><rect x="8" y="5" width="1" height="1" fill="#000"/><rect x="9" y="5" width="1" height="1" fill="#000"/><rect x="10" y="5" width="1" height="1" fill="#000"/><rect x="11" y="5" width="1" height="1" fill="#000"/><rect x="12" y="5" width="1" height="1" fill="#000"/><rect x="13" y="5" width="1" height="1" fill="#000"/><rect x="4" y="6" width="1" height="1" fill="#000"/><rect x="5" y="6" width="1" height="1" fill="#d0d0d0"/><rect x="6" y="6" width="1" height="1" fill="#000"/><rect x="7" y="6" width="1" height="1" fill="#000"/><rect x="8" y="6" width="1" height="1" fill="#000"/><rect x="9" y="6" width="1" height="1" fill="#000"/><rect x="10" y="6" width="1" height="1" fill="#d0d0d0"/><rect x="11" y="6" width="1" height="1" fill="#000"/><rect x="12" y="6" width="1" height="1" fill="#000"/><rect x="13" y="6" width="1" height="1" fill="#000"/><rect x="4" y="7" width="1" height="1" fill="#000"/><rect x="5" y="7" width="1" height="1" fill="#d0d0d0"/><rect x="6" y="7" width="1" height="1" fill="#000"/><rect x="7" y="7" width="1" height="1" fill="#000"/><rect x="8" y="7" width="1" height="1" fill="#000"/><rect x="9" y="7" width="1" height="1" fill="#000"/><rect x="10" y="7" width="1" height="1" fill="#d0d0d0"/><rect x="11" y="7" width="1" height="1" fill="#000"/><rect x="12" y="7" width="1" height="1" fill="#000"/><rect x="13" y="7" width="1" height="1" fill="#000"/><rect x="4" y="8" width="1" height="1" fill="#000"/><rect x="5" y="8" width="1" height="1" fill="#000"/><rect x="6" y="8" width="1" height="1" fill="#000"/><rect x="7" y="8" width="1" height="1" fill="#000"/><rect x="8" y="8" width="1" height="1" fill="#000"/><rect x="9" y="8" width="1" height="1" fill="#000"/><rect x="10" y="8" width="1" height="1" fill="#000"/><rect x="11" y="8" width="1" height="1" fill="#000"/><rect x="12" y="8" width="1" height="1" fill="#000"/><rect x="13" y="8" width="1" height="1" fill="#000"/><rect x="4" y="9" width="1" height="1" fill="#000"/><rect x="5" y="9" width="1" height="1" fill="#000"/><rect x="6" y="9" width="1" height="1" fill="#000"/><rect x="7" y="9" width="1" height="1" fill="#000"/><rect x="9" y="9" width="1" height="1" fill="#000"/><rect x="10" y="9" width="1" height="1" fill="#000"/><rect x="11" y="9" width="1" height="1" fill="#000"/><rect x="12" y="9" width="1" height="1" fill="#000"/><rect x="13" y="9" width="1" height="1" fill="#000"/><rect x="4" y="10" width="1" height="1" fill="#000"/><rect x="5" y="10" width="1" height="1" fill="#000"/><rect x="6" y="10" width="1" height="1" fill="#000"/><rect x="7" y="10" width="1" height="1" fill="#000"/><rect x="9" y="10" width="1" height="1" fill="#000"/><rect x="10" y="10" width="1" height="1" fill="#000"/><rect x="11" y="10" width="1" height="1" fill="#000"/><rect x="12" y="10" width="1" height="1" fill="#000"/><rect x="13" y="10" width="1" height="1" fill="#000"/><g fill="#000080"><rect x="7" y="14" width="1" height="1"/><rect x="9" y="14" width="1" height="1"/><rect x="11" y="14" width="1" height="1"/><rect x="13" y="14" width="5" height="1"/><rect x="16" y="12" width="1" height="5"/><rect x="17" y="13" width="1" height="3"/><rect x="18" y="14" width="1" height="1"/></g></svg></div>
<div class="a " style="left:574px;top:78px;width:222px;height:79px;border:1px solid #fff"></div>
<div class="a " style="left:573px;top:77px;width:222px;height:79px;border:1px solid #a0a0a0"></div>
<div class="a " style="left:578px;top:76px;width:59px;height:4px;background:#f0f0f0"></div>
<div class="t" style="left:579px;top:72px;transform:scaleX(0.915);transform-origin:0 0;">SITUAÇÃO</div>
<div class="a " style="left:579px;top:86px;width:13px;height:13px;background:#fff;border-style:solid;border-width:1px;border-color:#a0a0a0 #fff #fff #a0a0a0;box-shadow:inset 1px 1px 0 #696969, inset -1px -1px 0 #e3e3e3"></div>
<svg class="a" style="left:582px;top:89px" width="7" height="7" viewBox="0 0 7 7" fill="#000" shape-rendering="crispEdges"><rect x="6" y="0" width="1" height="1"/><rect x="5" y="1" width="1" height="1"/><rect x="6" y="1" width="1" height="1"/><rect x="0" y="2" width="1" height="1"/><rect x="4" y="2" width="1" height="1"/><rect x="5" y="2" width="1" height="1"/><rect x="6" y="2" width="1" height="1"/><rect x="0" y="3" width="1" height="1"/><rect x="1" y="3" width="1" height="1"/><rect x="3" y="3" width="1" height="1"/><rect x="4" y="3" width="1" height="1"/><rect x="5" y="3" width="1" height="1"/><rect x="0" y="4" width="1" height="1"/><rect x="1" y="4" width="1" height="1"/><rect x="2" y="4" width="1" height="1"/><rect x="3" y="4" width="1" height="1"/><rect x="4" y="4" width="1" height="1"/><rect x="1" y="5" width="1" height="1"/><rect x="2" y="5" width="1" height="1"/><rect x="3" y="5" width="1" height="1"/><rect x="2" y="6" width="1" height="1"/></svg>
<div class="t" style="left:597px;top:87px;transform:scaleX(0.9);transform-origin:0 0;color:#0000ff">PEN</div>
<div class="a " style="left:664px;top:86px;width:13px;height:13px;background:#fff;border-style:solid;border-width:1px;border-color:#a0a0a0 #fff #fff #a0a0a0;box-shadow:inset 1px 1px 0 #696969, inset -1px -1px 0 #e3e3e3"></div>
<svg class="a" style="left:667px;top:89px" width="7" height="7" viewBox="0 0 7 7" fill="#000" shape-rendering="crispEdges"><rect x="6" y="0" width="1" height="1"/><rect x="5" y="1" width="1" height="1"/><rect x="6" y="1" width="1" height="1"/><rect x="0" y="2" width="1" height="1"/><rect x="4" y="2" width="1" height="1"/><rect x="5" y="2" width="1" height="1"/><rect x="6" y="2" width="1" height="1"/><rect x="0" y="3" width="1" height="1"/><rect x="1" y="3" width="1" height="1"/><rect x="3" y="3" width="1" height="1"/><rect x="4" y="3" width="1" height="1"/><rect x="5" y="3" width="1" height="1"/><rect x="0" y="4" width="1" height="1"/><rect x="1" y="4" width="1" height="1"/><rect x="2" y="4" width="1" height="1"/><rect x="3" y="4" width="1" height="1"/><rect x="4" y="4" width="1" height="1"/><rect x="1" y="5" width="1" height="1"/><rect x="2" y="5" width="1" height="1"/><rect x="3" y="5" width="1" height="1"/><rect x="2" y="6" width="1" height="1"/></svg>
<div class="t" style="left:682px;top:87px;transform:scaleX(0.9);transform-origin:0 0;color:#0000ff">QUI</div>
<div class="a " style="left:744px;top:86px;width:13px;height:13px;background:#fff;border-style:solid;border-width:1px;border-color:#a0a0a0 #fff #fff #a0a0a0;box-shadow:inset 1px 1px 0 #696969, inset -1px -1px 0 #e3e3e3"></div>
<svg class="a" style="left:747px;top:89px" width="7" height="7" viewBox="0 0 7 7" fill="#000" shape-rendering="crispEdges"><rect x="6" y="0" width="1" height="1"/><rect x="5" y="1" width="1" height="1"/><rect x="6" y="1" width="1" height="1"/><rect x="0" y="2" width="1" height="1"/><rect x="4" y="2" width="1" height="1"/><rect x="5" y="2" width="1" height="1"/><rect x="6" y="2" width="1" height="1"/><rect x="0" y="3" width="1" height="1"/><rect x="1" y="3" width="1" height="1"/><rect x="3" y="3" width="1" height="1"/><rect x="4" y="3" width="1" height="1"/><rect x="5" y="3" width="1" height="1"/><rect x="0" y="4" width="1" height="1"/><rect x="1" y="4" width="1" height="1"/><rect x="2" y="4" width="1" height="1"/><rect x="3" y="4" width="1" height="1"/><rect x="4" y="4" width="1" height="1"/><rect x="1" y="5" width="1" height="1"/><rect x="2" y="5" width="1" height="1"/><rect x="3" y="5" width="1" height="1"/><rect x="2" y="6" width="1" height="1"/></svg>
<div class="t" style="left:762px;top:87px;transform:scaleX(0.9);transform-origin:0 0;color:#0000ff">CAN</div>
<div class="t" style="left:579px;top:109px;transform:scaleX(0.9);transform-origin:0 0;color:#0000ff">STATUS:</div>
<div class="a " style="left:579px;top:121px;width:89px;height:21px;background:#fff;border-style:solid;border-width:1px;border-color:#a0a0a0 #fff #fff #a0a0a0;box-shadow:inset 1px 1px 0 #696969, inset -1px -1px 0 #e3e3e3"></div>
<div class="a " style="left:650px;top:123px;width:16px;height:17px;background:#f0f0f0;border-style:solid;border-width:1px;border-color:#fff #696969 #696969 #fff;box-shadow:inset 1px 1px 0 #e3e3e3, inset -1px -1px 0 #a0a0a0;"></div>
<svg class="a" style="left:654px;top:130px" width="7" height="4" viewBox="0 0 7 4" shape-rendering="crispEdges"><path d="M0 0H7V1H6V2H5V3H4V4H3V3H2V2H1V1H0Z" fill="#000"/></svg>
<div class="t" style="left:675px;top:109px;transform:scaleX(0.9);transform-origin:0 0;color:#0000ff">CONTA:</div>
<div class="a " style="left:675px;top:121px;width:113px;height:21px;background:#fff;border-style:solid;border-width:1px;border-color:#a0a0a0 #fff #fff #a0a0a0;box-shadow:inset 1px 1px 0 #696969, inset -1px -1px 0 #e3e3e3"></div>
<div class="a " style="left:770px;top:123px;width:16px;height:17px;background:#f0f0f0;border-style:solid;border-width:1px;border-color:#fff #696969 #696969 #fff;box-shadow:inset 1px 1px 0 #e3e3e3, inset -1px -1px 0 #a0a0a0;"></div>
<svg class="a" style="left:774px;top:130px" width="7" height="4" viewBox="0 0 7 4" shape-rendering="crispEdges"><path d="M0 0H7V1H6V2H5V3H4V4H3V3H2V2H1V1H0Z" fill="#000"/></svg>
<div class="a " style="left:798px;top:78px;width:166px;height:79px;border:1px solid #fff"></div>
<div class="a " style="left:797px;top:77px;width:166px;height:79px;border:1px solid #a0a0a0"></div>
<div class="a " style="left:802px;top:76px;width:54px;height:4px;background:#f0f0f0"></div>
<div class="t" style="left:803px;top:72px;transform:scaleX(0.915);transform-origin:0 0;">PERÍODO</div>
<svg class="a" style="left:804px;top:86px" width="12" height="12" viewBox="0 0 12 12" shape-rendering="crispEdges"><rect x="2" y="2" width="8" height="8" fill="#fff"/><rect x="4" y="1" width="4" height="10" fill="#fff"/><rect x="1" y="4" width="10" height="4" fill="#fff"/><rect x="4" y="0" width="1" height="1" fill="#a0a0a0"/><rect x="5" y="0" width="1" height="1" fill="#a0a0a0"/><rect x="6" y="0" width="1" height="1" fill="#a0a0a0"/><rect x="7" y="0" width="1" height="1" fill="#a0a0a0"/><rect x="2" y="1" width="1" height="1" fill="#a0a0a0"/><rect x="3" y="1" width="1" height="1" fill="#a0a0a0"/><rect x="4" y="1" width="1" height="1" fill="#696969"/><rect x="5" y="1" width="1" height="1" fill="#696969"/><rect x="6" y="1" width="1" height="1" fill="#696969"/><rect x="7" y="1" width="1" height="1" fill="#696969"/><rect x="8" y="1" width="1" height="1" fill="#a0a0a0"/><rect x="9" y="1" width="1" height="1" fill="#a0a0a0"/><rect x="1" y="2" width="1" height="1" fill="#a0a0a0"/><rect x="2" y="2" width="1" height="1" fill="#696969"/><rect x="3" y="2" width="1" height="1" fill="#696969"/><rect x="8" y="2" width="1" height="1" fill="#696969"/><rect x="9" y="2" width="1" height="1" fill="#696969"/><rect x="10" y="2" width="1" height="1" fill="#ffffff"/><rect x="1" y="3" width="1" height="1" fill="#a0a0a0"/><rect x="2" y="3" width="1" height="1" fill="#696969"/><rect x="9" y="3" width="1" height="1" fill="#e3e3e3"/><rect x="10" y="3" width="1" height="1" fill="#ffffff"/><rect x="0" y="4" width="1" height="1" fill="#a0a0a0"/><rect x="1" y="4" width="1" height="1" fill="#696969"/><rect x="10" y="4" width="1" height="1" fill="#e3e3e3"/><rect x="11" y="4" width="1" height="1" fill="#ffffff"/><rect x="0" y="5" width="1" height="1" fill="#a0a0a0"/><rect x="1" y="5" width="1" height="1" fill="#696969"/><rect x="10" y="5" width="1" height="1" fill="#e3e3e3"/><rect x="11" y="5" width="1" height="1" fill="#ffffff"/><rect x="0" y="6" width="1" height="1" fill="#a0a0a0"/><rect x="1" y="6" width="1" height="1" fill="#696969"/><rect x="10" y="6" width="1" height="1" fill="#e3e3e3"/><rect x="11" y="6" width="1" height="1" fill="#ffffff"/><rect x="0" y="7" width="1" height="1" fill="#a0a0a0"/><rect x="1" y="7" width="1" height="1" fill="#696969"/><rect x="10" y="7" width="1" height="1" fill="#e3e3e3"/><rect x="11" y="7" width="1" height="1" fill="#ffffff"/><rect x="1" y="8" width="1" height="1" fill="#a0a0a0"/><rect x="2" y="8" width="1" height="1" fill="#696969"/><rect x="9" y="8" width="1" height="1" fill="#e3e3e3"/><rect x="10" y="8" width="1" height="1" fill="#ffffff"/><rect x="1" y="9" width="1" height="1" fill="#a0a0a0"/><rect x="2" y="9" width="1" height="1" fill="#e3e3e3"/><rect x="3" y="9" width="1" height="1" fill="#e3e3e3"/><rect x="8" y="9" width="1" height="1" fill="#e3e3e3"/><rect x="9" y="9" width="1" height="1" fill="#e3e3e3"/><rect x="10" y="9" width="1" height="1" fill="#ffffff"/><rect x="2" y="10" width="1" height="1" fill="#ffffff"/><rect x="3" y="10" width="1" height="1" fill="#ffffff"/><rect x="4" y="10" width="1" height="1" fill="#e3e3e3"/><rect x="5" y="10" width="1" height="1" fill="#e3e3e3"/><rect x="6" y="10" width="1" height="1" fill="#e3e3e3"/><rect x="7" y="10" width="1" height="1" fill="#e3e3e3"/><rect x="8" y="10" width="1" height="1" fill="#ffffff"/><rect x="9" y="10" width="1" height="1" fill="#ffffff"/><rect x="4" y="11" width="1" height="1" fill="#ffffff"/><rect x="5" y="11" width="1" height="1" fill="#ffffff"/><rect x="6" y="11" width="1" height="1" fill="#ffffff"/><rect x="7" y="11" width="1" height="1" fill="#ffffff"/></svg>
<div class="t" style="left:820px;top:87px;transform:scaleX(0.9);transform-origin:0 0;color:#0000ff">DAT</div>
<svg class="a" style="left:861px;top:86px" width="12" height="12" viewBox="0 0 12 12" shape-rendering="crispEdges"><rect x="2" y="2" width="8" height="8" fill="#fff"/><rect x="4" y="1" width="4" height="10" fill="#fff"/><rect x="1" y="4" width="10" height="4" fill="#fff"/><rect x="4" y="0" width="1" height="1" fill="#a0a0a0"/><rect x="5" y="0" width="1" height="1" fill="#a0a0a0"/><rect x="6" y="0" width="1" height="1" fill="#a0a0a0"/><rect x="7" y="0" width="1" height="1" fill="#a0a0a0"/><rect x="2" y="1" width="1" height="1" fill="#a0a0a0"/><rect x="3" y="1" width="1" height="1" fill="#a0a0a0"/><rect x="4" y="1" width="1" height="1" fill="#696969"/><rect x="5" y="1" width="1" height="1" fill="#696969"/><rect x="6" y="1" width="1" height="1" fill="#696969"/><rect x="7" y="1" width="1" height="1" fill="#696969"/><rect x="8" y="1" width="1" height="1" fill="#a0a0a0"/><rect x="9" y="1" width="1" height="1" fill="#a0a0a0"/><rect x="1" y="2" width="1" height="1" fill="#a0a0a0"/><rect x="2" y="2" width="1" height="1" fill="#696969"/><rect x="3" y="2" width="1" height="1" fill="#696969"/><rect x="8" y="2" width="1" height="1" fill="#696969"/><rect x="9" y="2" width="1" height="1" fill="#696969"/><rect x="10" y="2" width="1" height="1" fill="#ffffff"/><rect x="1" y="3" width="1" height="1" fill="#a0a0a0"/><rect x="2" y="3" width="1" height="1" fill="#696969"/><rect x="9" y="3" width="1" height="1" fill="#e3e3e3"/><rect x="10" y="3" width="1" height="1" fill="#ffffff"/><rect x="0" y="4" width="1" height="1" fill="#a0a0a0"/><rect x="1" y="4" width="1" height="1" fill="#696969"/><rect x="10" y="4" width="1" height="1" fill="#e3e3e3"/><rect x="11" y="4" width="1" height="1" fill="#ffffff"/><rect x="0" y="5" width="1" height="1" fill="#a0a0a0"/><rect x="1" y="5" width="1" height="1" fill="#696969"/><rect x="10" y="5" width="1" height="1" fill="#e3e3e3"/><rect x="11" y="5" width="1" height="1" fill="#ffffff"/><rect x="0" y="6" width="1" height="1" fill="#a0a0a0"/><rect x="1" y="6" width="1" height="1" fill="#696969"/><rect x="10" y="6" width="1" height="1" fill="#e3e3e3"/><rect x="11" y="6" width="1" height="1" fill="#ffffff"/><rect x="0" y="7" width="1" height="1" fill="#a0a0a0"/><rect x="1" y="7" width="1" height="1" fill="#696969"/><rect x="10" y="7" width="1" height="1" fill="#e3e3e3"/><rect x="11" y="7" width="1" height="1" fill="#ffffff"/><rect x="1" y="8" width="1" height="1" fill="#a0a0a0"/><rect x="2" y="8" width="1" height="1" fill="#696969"/><rect x="9" y="8" width="1" height="1" fill="#e3e3e3"/><rect x="10" y="8" width="1" height="1" fill="#ffffff"/><rect x="1" y="9" width="1" height="1" fill="#a0a0a0"/><rect x="2" y="9" width="1" height="1" fill="#e3e3e3"/><rect x="3" y="9" width="1" height="1" fill="#e3e3e3"/><rect x="8" y="9" width="1" height="1" fill="#e3e3e3"/><rect x="9" y="9" width="1" height="1" fill="#e3e3e3"/><rect x="10" y="9" width="1" height="1" fill="#ffffff"/><rect x="2" y="10" width="1" height="1" fill="#ffffff"/><rect x="3" y="10" width="1" height="1" fill="#ffffff"/><rect x="4" y="10" width="1" height="1" fill="#e3e3e3"/><rect x="5" y="10" width="1" height="1" fill="#e3e3e3"/><rect x="6" y="10" width="1" height="1" fill="#e3e3e3"/><rect x="7" y="10" width="1" height="1" fill="#e3e3e3"/><rect x="8" y="10" width="1" height="1" fill="#ffffff"/><rect x="9" y="10" width="1" height="1" fill="#ffffff"/><rect x="4" y="11" width="1" height="1" fill="#ffffff"/><rect x="5" y="11" width="1" height="1" fill="#ffffff"/><rect x="6" y="11" width="1" height="1" fill="#ffffff"/><rect x="7" y="11" width="1" height="1" fill="#ffffff"/><rect x="5" y="4" width="2" height="4" fill="#000"/><rect x="4" y="5" width="4" height="2" fill="#000"/></svg>
<div class="t" style="left:878px;top:87px;transform:scaleX(0.9);transform-origin:0 0;color:#0000ff">VEN</div>
<svg class="a" style="left:919px;top:86px" width="12" height="12" viewBox="0 0 12 12" shape-rendering="crispEdges"><rect x="2" y="2" width="8" height="8" fill="#fff"/><rect x="4" y="1" width="4" height="10" fill="#fff"/><rect x="1" y="4" width="10" height="4" fill="#fff"/><rect x="4" y="0" width="1" height="1" fill="#a0a0a0"/><rect x="5" y="0" width="1" height="1" fill="#a0a0a0"/><rect x="6" y="0" width="1" height="1" fill="#a0a0a0"/><rect x="7" y="0" width="1" height="1" fill="#a0a0a0"/><rect x="2" y="1" width="1" height="1" fill="#a0a0a0"/><rect x="3" y="1" width="1" height="1" fill="#a0a0a0"/><rect x="4" y="1" width="1" height="1" fill="#696969"/><rect x="5" y="1" width="1" height="1" fill="#696969"/><rect x="6" y="1" width="1" height="1" fill="#696969"/><rect x="7" y="1" width="1" height="1" fill="#696969"/><rect x="8" y="1" width="1" height="1" fill="#a0a0a0"/><rect x="9" y="1" width="1" height="1" fill="#a0a0a0"/><rect x="1" y="2" width="1" height="1" fill="#a0a0a0"/><rect x="2" y="2" width="1" height="1" fill="#696969"/><rect x="3" y="2" width="1" height="1" fill="#696969"/><rect x="8" y="2" width="1" height="1" fill="#696969"/><rect x="9" y="2" width="1" height="1" fill="#696969"/><rect x="10" y="2" width="1" height="1" fill="#ffffff"/><rect x="1" y="3" width="1" height="1" fill="#a0a0a0"/><rect x="2" y="3" width="1" height="1" fill="#696969"/><rect x="9" y="3" width="1" height="1" fill="#e3e3e3"/><rect x="10" y="3" width="1" height="1" fill="#ffffff"/><rect x="0" y="4" width="1" height="1" fill="#a0a0a0"/><rect x="1" y="4" width="1" height="1" fill="#696969"/><rect x="10" y="4" width="1" height="1" fill="#e3e3e3"/><rect x="11" y="4" width="1" height="1" fill="#ffffff"/><rect x="0" y="5" width="1" height="1" fill="#a0a0a0"/><rect x="1" y="5" width="1" height="1" fill="#696969"/><rect x="10" y="5" width="1" height="1" fill="#e3e3e3"/><rect x="11" y="5" width="1" height="1" fill="#ffffff"/><rect x="0" y="6" width="1" height="1" fill="#a0a0a0"/><rect x="1" y="6" width="1" height="1" fill="#696969"/><rect x="10" y="6" width="1" height="1" fill="#e3e3e3"/><rect x="11" y="6" width="1" height="1" fill="#ffffff"/><rect x="0" y="7" width="1" height="1" fill="#a0a0a0"/><rect x="1" y="7" width="1" height="1" fill="#696969"/><rect x="10" y="7" width="1" height="1" fill="#e3e3e3"/><rect x="11" y="7" width="1" height="1" fill="#ffffff"/><rect x="1" y="8" width="1" height="1" fill="#a0a0a0"/><rect x="2" y="8" width="1" height="1" fill="#696969"/><rect x="9" y="8" width="1" height="1" fill="#e3e3e3"/><rect x="10" y="8" width="1" height="1" fill="#ffffff"/><rect x="1" y="9" width="1" height="1" fill="#a0a0a0"/><rect x="2" y="9" width="1" height="1" fill="#e3e3e3"/><rect x="3" y="9" width="1" height="1" fill="#e3e3e3"/><rect x="8" y="9" width="1" height="1" fill="#e3e3e3"/><rect x="9" y="9" width="1" height="1" fill="#e3e3e3"/><rect x="10" y="9" width="1" height="1" fill="#ffffff"/><rect x="2" y="10" width="1" height="1" fill="#ffffff"/><rect x="3" y="10" width="1" height="1" fill="#ffffff"/><rect x="4" y="10" width="1" height="1" fill="#e3e3e3"/><rect x="5" y="10" width="1" height="1" fill="#e3e3e3"/><rect x="6" y="10" width="1" height="1" fill="#e3e3e3"/><rect x="7" y="10" width="1" height="1" fill="#e3e3e3"/><rect x="8" y="10" width="1" height="1" fill="#ffffff"/><rect x="9" y="10" width="1" height="1" fill="#ffffff"/><rect x="4" y="11" width="1" height="1" fill="#ffffff"/><rect x="5" y="11" width="1" height="1" fill="#ffffff"/><rect x="6" y="11" width="1" height="1" fill="#ffffff"/><rect x="7" y="11" width="1" height="1" fill="#ffffff"/></svg>
<div class="t" style="left:936px;top:87px;transform:scaleX(0.9);transform-origin:0 0;color:#0000ff">QUI</div>
<div class="t" style="left:803px;top:109px;transform:scaleX(0.9);transform-origin:0 0;color:#0000ff">INICIAL:</div>
<div class="a " style="left:803px;top:121px;width:73px;height:21px;background:#fff;border-style:solid;border-width:1px;border-color:#a0a0a0 #fff #fff #a0a0a0;box-shadow:inset 1px 1px 0 #696969, inset -1px -1px 0 #e3e3e3"></div>
<div class="t" style="left:813px;top:125px;transform:scaleX(0.9);transform-origin:0 0;letter-spacing:4px;font-size:12.5px">/ /</div>
<div class="t" style="left:883px;top:109px;transform:scaleX(0.9);transform-origin:0 0;color:#0000ff">FINAL:</div>
<div class="a " style="left:883px;top:121px;width:73px;height:21px;background:#fff;border-style:solid;border-width:1px;border-color:#a0a0a0 #fff #fff #a0a0a0;box-shadow:inset 1px 1px 0 #696969, inset -1px -1px 0 #e3e3e3"></div>
<div class="t" style="left:893px;top:125px;transform:scaleX(0.9);transform-origin:0 0;letter-spacing:4px;font-size:12.5px">/ /</div>
<div class="t" style="left:579px;top:167px;transform:scaleX(0.9);transform-origin:0 0;">BUSCAR:</div>
<div class="a " style="left:627px;top:163px;width:145px;height:21px;background:#fff;border-style:solid;border-width:1px;border-color:#a0a0a0 #fff #fff #a0a0a0;box-shadow:inset 1px 1px 0 #696969, inset -1px -1px 0 #e3e3e3"></div>
<div class="a " style="left:771px;top:163px;width:96px;height:21px;background:#f0f0f0;border-style:solid;border-width:1px;border-color:#fff #696969 #696969 #fff;box-shadow:inset 1px 1px 0 #e3e3e3, inset -1px -1px 0 #a0a0a0;"></div>
<div class="t" style="left:786px;top:167px;transform:scaleX(0.94);transform-origin:0 0;">Marcar Todos</div>
<div class="a " style="left:867px;top:163px;width:97px;height:21px;background:#f0f0f0;border-style:solid;border-width:1px;border-color:#fff #696969 #696969 #fff;box-shadow:inset 1px 1px 0 #e3e3e3, inset -1px -1px 0 #a0a0a0;"></div>
<div class="t" style="left:872px;top:167px;transform:scaleX(0.925);transform-origin:0 0;">Desmarcar Todos</div>
<div class="a " style="left:11px;top:194px;width:953px;height:389px;border:1px solid #646464;background:#f0f0f0"></div>
<div class="a " style="left:12px;top:195px;width:950px;height:15px;background:#f0f0f0"></div>
<div class="a " style="left:26px;top:211px;width:936px;height:15px;background:#fff"></div>
<div class="a " style="left:26px;top:227px;width:936px;height:15px;background:#fff"></div>
<div class="a " style="left:26px;top:243px;width:936px;height:15px;background:#fff"></div>
<div class="a " style="left:26px;top:259px;width:936px;height:15px;background:#c0ffc0"></div>
<div class="a " style="left:26px;top:275px;width:936px;height:15px;background:#c0ffc0"></div>
<div class="a " style="left:26px;top:291px;width:936px;height:15px;background:#c0ffc0"></div>
<div class="a " style="left:26px;top:307px;width:936px;height:15px;background:#ff8000"></div>
<div class="a " style="left:26px;top:323px;width:936px;height:15px;background:#fff"></div>
<div class="a " style="left:26px;top:339px;width:936px;height:15px;background:#fff"></div>
<div class="a " style="left:26px;top:355px;width:936px;height:15px;background:#fff"></div>
<div class="a " style="left:26px;top:371px;width:936px;height:15px;background:#ff8000"></div>
<div class="a " style="left:26px;top:387px;width:936px;height:15px;background:#c0ffc0"></div>
<div class="a " style="left:26px;top:403px;width:936px;height:15px;background:#c0ffc0"></div>
<div class="a " style="left:12px;top:195px;width:13px;height:15px;border:1px solid #fff;background:#f0f0f0"></div>
<div class="a " style="left:12px;top:211px;width:13px;height:15px;border:1px solid #fff;background:#f0f0f0"></div>
<div class="a " style="left:12px;top:227px;width:13px;height:15px;border:1px solid #fff;background:#f0f0f0"></div>
<div class="a " style="left:12px;top:243px;width:13px;height:15px;border:1px solid #fff;background:#f0f0f0"></div>
<div class="a " style="left:12px;top:259px;width:13px;height:15px;border:1px solid #fff;background:#f0f0f0"></div>
<div class="a " style="left:12px;top:275px;width:13px;height:15px;border:1px solid #fff;background:#f0f0f0"></div>
<div class="a " style="left:12px;top:291px;width:13px;height:15px;border:1px solid #fff;background:#f0f0f0"></div>
<div class="a " style="left:12px;top:307px;width:13px;height:15px;border:1px solid #fff;background:#f0f0f0"></div>
<div class="a " style="left:12px;top:323px;width:13px;height:15px;border:1px solid #fff;background:#f0f0f0"></div>
<div class="a " style="left:12px;top:339px;width:13px;height:15px;border:1px solid #fff;background:#f0f0f0"></div>
<div class="a " style="left:12px;top:355px;width:13px;height:15px;border:1px solid #fff;background:#f0f0f0"></div>
<div class="a " style="left:12px;top:371px;width:13px;height:15px;border:1px solid #fff;background:#f0f0f0"></div>
<div class="a " style="left:12px;top:387px;width:13px;height:15px;border:1px solid #fff;background:#f0f0f0"></div>
<div class="a " style="left:12px;top:403px;width:13px;height:15px;border:1px solid #fff;background:#f0f0f0"></div>
<div class="a " style="left:26px;top:195px;width:66px;height:15px;border:1px solid #fff;background:#f0f0f0"></div>
<div class="a " style="left:93px;top:195px;width:64px;height:15px;border:1px solid #fff;background:#f0f0f0"></div>
<div class="a " style="left:158px;top:195px;width:62px;height:15px;border:1px solid #fff;background:#f0f0f0"></div>
<div class="a " style="left:221px;top:195px;width:14px;height:15px;border:1px solid #fff;background:#f0f0f0"></div>
<div class="a " style="left:236px;top:195px;width:161px;height:15px;border:1px solid #fff;background:#f0f0f0"></div>
<div class="a " style="left:398px;top:195px;width:78px;height:15px;border:1px solid #fff;background:#f0f0f0"></div>
<div class="a " style="left:477px;top:195px;width:64px;height:15px;border:1px solid #fff;background:#f0f0f0"></div>
<div class="a " style="left:542px;top:195px;width:103px;height:15px;border:1px solid #fff;background:#f0f0f0"></div>
<div class="a " style="left:646px;top:195px;width:64px;height:15px;border:1px solid #fff;background:#f0f0f0"></div>
<div class="a " style="left:711px;top:195px;width:56px;height:15px;border:1px solid #fff;background:#f0f0f0"></div>
<div class="a " style="left:768px;top:195px;width:56px;height:15px;border:1px solid #fff;background:#f0f0f0"></div>
<div class="a " style="left:825px;top:195px;width:64px;height:15px;border:1px solid #fff;background:#f0f0f0"></div>
<div class="a " style="left:890px;top:195px;width:72px;height:15px;border:1px solid #fff;background:#f0f0f0"></div>
<div class="a " style="left:13px;top:210px;width:949px;height:1px;background:#000"></div>
<div class="a " style="left:13px;top:226px;width:949px;height:1px;background:#000"></div>
<div class="a " style="left:13px;top:242px;width:949px;height:1px;background:#000"></div>
<div class="a " style="left:13px;top:258px;width:949px;height:1px;background:#000"></div>
<div class="a " style="left:13px;top:274px;width:949px;height:1px;background:#000"></div>
<div class="a " style="left:13px;top:290px;width:949px;height:1px;background:#000"></div>
<div class="a " style="left:13px;top:306px;width:949px;height:1px;background:#000"></div>
<div class="a " style="left:13px;top:322px;width:949px;height:1px;background:#000"></div>
<div class="a " style="left:13px;top:338px;width:949px;height:1px;background:#000"></div>
<div class="a " style="left:13px;top:354px;width:949px;height:1px;background:#000"></div>
<div class="a " style="left:13px;top:370px;width:949px;height:1px;background:#000"></div>
<div class="a " style="left:13px;top:386px;width:949px;height:1px;background:#000"></div>
<div class="a " style="left:13px;top:402px;width:949px;height:1px;background:#000"></div>
<div class="a " style="left:13px;top:418px;width:949px;height:1px;background:#000"></div>
<div class="a " style="left:25px;top:195px;width:1px;height:224px;background:#000"></div>
<div class="a " style="left:92px;top:195px;width:1px;height:224px;background:#000"></div>
<div class="a " style="left:157px;top:195px;width:1px;height:224px;background:#000"></div>
<div class="a " style="left:220px;top:195px;width:1px;height:224px;background:#000"></div>
<div class="a " style="left:235px;top:195px;width:1px;height:224px;background:#000"></div>
<div class="a " style="left:397px;top:195px;width:1px;height:224px;background:#000"></div>
<div class="a " style="left:476px;top:195px;width:1px;height:224px;background:#000"></div>
<div class="a " style="left:541px;top:195px;width:1px;height:224px;background:#000"></div>
<div class="a " style="left:645px;top:195px;width:1px;height:224px;background:#000"></div>
<div class="a " style="left:710px;top:195px;width:1px;height:224px;background:#000"></div>
<div class="a " style="left:767px;top:195px;width:1px;height:224px;background:#000"></div>
<div class="a " style="left:824px;top:195px;width:1px;height:224px;background:#000"></div>
<div class="a " style="left:889px;top:195px;width:1px;height:224px;background:#000"></div>
<div class="a " style="left:962px;top:195px;width:1px;height:224px;background:#000"></div>
<div class="a " style="left:26px;top:210px;width:1px;height:1px;background:#fff"></div>
<div class="a " style="left:93px;top:210px;width:1px;height:1px;background:#fff"></div>
<div class="a " style="left:158px;top:210px;width:1px;height:1px;background:#fff"></div>
<div class="a " style="left:221px;top:210px;width:1px;height:1px;background:#fff"></div>
<div class="a " style="left:236px;top:210px;width:1px;height:1px;background:#fff"></div>
<div class="a " style="left:398px;top:210px;width:1px;height:1px;background:#fff"></div>
<div class="a " style="left:477px;top:210px;width:1px;height:1px;background:#fff"></div>
<div class="a " style="left:542px;top:210px;width:1px;height:1px;background:#fff"></div>
<div class="a " style="left:646px;top:210px;width:1px;height:1px;background:#fff"></div>
<div class="a " style="left:711px;top:210px;width:1px;height:1px;background:#fff"></div>
<div class="a " style="left:768px;top:210px;width:1px;height:1px;background:#fff"></div>
<div class="a " style="left:825px;top:210px;width:1px;height:1px;background:#fff"></div>
<div class="a " style="left:890px;top:210px;width:1px;height:1px;background:#fff"></div>
<div class="t" style="left:15px;top:197px;transform:scaleX(0.95);transform-origin:0 0;">X</div>
<div class="t" style="left:29px;top:197px;transform:scaleX(0.9);transform-origin:0 0;">ID</div>
<div class="t" style="left:96px;top:197px;transform:scaleX(0.9);transform-origin:0 0;">Data</div>
<div class="t" style="left:161px;top:197px;transform:scaleX(0.9);transform-origin:0 0;">Tipo</div>
<div class="t" style="left:224px;top:197px;transform:scaleX(0.9);transform-origin:0 0;">R</div>
<div class="t" style="left:239px;top:197px;transform:scaleX(0.9);transform-origin:0 0;">CLI (Código+Apelido/Fantasia)</div>
<div class="t" style="left:401px;top:197px;transform:scaleX(0.9);transform-origin:0 0;">Conta</div>
<div class="t" style="left:480px;top:197px;transform:scaleX(0.9);transform-origin:0 0;">Documento</div>
<div class="t" style="left:545px;top:197px;transform:scaleX(0.9);transform-origin:0 0;">Descrição</div>
<div class="t" style="left:649px;top:197px;transform:scaleX(0.9);transform-origin:0 0;">Vencimento</div>
<div class="t" style="left:714px;top:197px;transform:scaleX(0.9);transform-origin:0 0;">Valor</div>
<div class="t" style="left:771px;top:197px;transform:scaleX(0.9);transform-origin:0 0;">Quitado</div>
<div class="t" style="left:828px;top:197px;transform:scaleX(0.9);transform-origin:0 0;">Quitação</div>
<div class="t" style="left:893px;top:197px;transform:scaleX(0.9);transform-origin:0 0;">Situação</div>
<div class="a" style="left:26px;top:211px;width:66px;height:15px;overflow:hidden"><div class="t" style="left:4px;top:2px;transform:scaleX(0.95);transform-origin:0 0;color:#c40000">54-2/4</div></div>
<div class="a" style="left:93px;top:211px;width:64px;height:15px;overflow:hidden"><div class="t" style="left:4px;top:2px;transform:scaleX(0.95);transform-origin:0 0;color:#c40000">15/07/2025</div></div>
<div class="a" style="left:158px;top:211px;width:62px;height:15px;overflow:hidden"><div class="t" style="left:4px;top:2px;transform:scaleX(0.88);transform-origin:0 0;color:#c40000">BOLETO</div></div>
<div class="a" style="left:221px;top:211px;width:14px;height:15px;overflow:hidden"><div class="t" style="left:4px;top:3px;transform:scaleX(0.88);transform-origin:0 0;color:#c40000">N</div></div>
<div class="a" style="left:236px;top:211px;width:161px;height:15px;overflow:hidden"><div class="t" style="left:4px;top:2px;transform:scaleX(0.88);transform-origin:0 0;color:#c40000">3 CAMILA OLIVEIRA SANTOS</div></div>
<div class="a" style="left:542px;top:211px;width:103px;height:15px;overflow:hidden"><div class="t" style="left:4px;top:2px;transform:scaleX(0.88);transform-origin:0 0;color:#c40000">ACERTO CS25 (0 C(</div></div>
<div class="a" style="left:646px;top:211px;width:64px;height:15px;overflow:hidden"><div class="t" style="left:4px;top:2px;transform:scaleX(0.95);transform-origin:0 0;color:#c40000">30/05/2025</div></div>
<div class="t" style="right:210px;top:213px;transform:scaleX(0.95);transform-origin:100% 0;color:#c40000">26,24</div>
<div class="a" style="left:890px;top:211px;width:72px;height:15px;overflow:hidden"><div class="t" style="left:4px;top:2px;transform:scaleX(0.88);transform-origin:0 0;color:#c40000">PENDENTE</div></div>
<div class="a" style="left:26px;top:227px;width:66px;height:15px;overflow:hidden"><div class="t" style="left:4px;top:2px;transform:scaleX(0.95);transform-origin:0 0;color:#ff8000">54-3/4</div></div>
<div class="a" style="left:93px;top:227px;width:64px;height:15px;overflow:hidden"><div class="t" style="left:4px;top:2px;transform:scaleX(0.95);transform-origin:0 0;color:#ff8000">15/07/2025</div></div>
<div class="a" style="left:158px;top:227px;width:62px;height:15px;overflow:hidden"><div class="t" style="left:4px;top:2px;transform:scaleX(0.88);transform-origin:0 0;color:#ff8000">BOLETO</div></div>
<div class="a" style="left:221px;top:227px;width:14px;height:15px;overflow:hidden"><div class="t" style="left:4px;top:3px;transform:scaleX(0.88);transform-origin:0 0;color:#ff8000">N</div></div>
<div class="a" style="left:236px;top:227px;width:161px;height:15px;overflow:hidden"><div class="t" style="left:4px;top:2px;transform:scaleX(0.88);transform-origin:0 0;color:#ff8000">3 CAMILA OLIVEIRA SANTOS</div></div>
<div class="a" style="left:542px;top:227px;width:103px;height:15px;overflow:hidden"><div class="t" style="left:4px;top:2px;transform:scaleX(0.88);transform-origin:0 0;color:#ff8000">ACERTO CS25 (0 C(</div></div>
<div class="a" style="left:646px;top:227px;width:64px;height:15px;overflow:hidden"><div class="t" style="left:4px;top:2px;transform:scaleX(0.95);transform-origin:0 0;color:#ff8000">18/06/2025</div></div>
<div class="t" style="right:210px;top:229px;transform:scaleX(0.95);transform-origin:100% 0;color:#ff8000">24,98</div>
<div class="a" style="left:890px;top:227px;width:72px;height:15px;overflow:hidden"><div class="t" style="left:4px;top:2px;transform:scaleX(0.88);transform-origin:0 0;color:#ff8000">PENDENTE</div></div>
<div class="a" style="left:26px;top:243px;width:66px;height:15px;overflow:hidden"><div class="t" style="left:4px;top:2px;transform:scaleX(0.95);transform-origin:0 0;color:#000">54-4/4</div></div>
<div class="a" style="left:93px;top:243px;width:64px;height:15px;overflow:hidden"><div class="t" style="left:4px;top:2px;transform:scaleX(0.95);transform-origin:0 0;color:#000">15/07/2025</div></div>
<div class="a" style="left:158px;top:243px;width:62px;height:15px;overflow:hidden"><div class="t" style="left:4px;top:2px;transform:scaleX(0.88);transform-origin:0 0;color:#000">BOLETO</div></div>
<div class="a" style="left:221px;top:243px;width:14px;height:15px;overflow:hidden"><div class="t" style="left:4px;top:3px;transform:scaleX(0.88);transform-origin:0 0;color:#000">N</div></div>
<div class="a" style="left:236px;top:243px;width:161px;height:15px;overflow:hidden"><div class="t" style="left:4px;top:2px;transform:scaleX(0.88);transform-origin:0 0;color:#000">3 CAMILA OLIVEIRA SANTOS</div></div>
<div class="a" style="left:542px;top:243px;width:103px;height:15px;overflow:hidden"><div class="t" style="left:4px;top:2px;transform:scaleX(0.88);transform-origin:0 0;color:#000">ACERTO CS25 (0 C(</div></div>
<div class="a" style="left:646px;top:243px;width:64px;height:15px;overflow:hidden"><div class="t" style="left:4px;top:2px;transform:scaleX(0.95);transform-origin:0 0;color:#000">08/07/2025</div></div>
<div class="t" style="right:210px;top:245px;transform:scaleX(0.95);transform-origin:100% 0;color:#000">24,98</div>
<div class="a" style="left:890px;top:243px;width:72px;height:15px;overflow:hidden"><div class="t" style="left:4px;top:2px;transform:scaleX(0.88);transform-origin:0 0;color:#000">PENDENTE</div></div>
<div class="a" style="left:26px;top:259px;width:66px;height:15px;overflow:hidden"><div class="t" style="left:4px;top:2px;transform:scaleX(0.95);transform-origin:0 0;color:#3333ff">52-1/1</div></div>
<div class="a" style="left:93px;top:259px;width:64px;height:15px;overflow:hidden"><div class="t" style="left:4px;top:2px;transform:scaleX(0.95);transform-origin:0 0;color:#3333ff">08/07/2025</div></div>
<div class="a" style="left:158px;top:259px;width:62px;height:15px;overflow:hidden"><div class="t" style="left:4px;top:2px;transform:scaleX(0.88);transform-origin:0 0;color:#3333ff">BOLETO</div></div>
<div class="a" style="left:221px;top:259px;width:14px;height:15px;overflow:hidden"><div class="t" style="left:4px;top:3px;transform:scaleX(0.88);transform-origin:0 0;color:#3333ff">N</div></div>
<div class="a" style="left:236px;top:259px;width:161px;height:15px;overflow:hidden"><div class="t" style="left:4px;top:2px;transform:scaleX(0.88);transform-origin:0 0;color:#3333ff">0 ANA CLARA SILVA</div></div>
<div class="a" style="left:542px;top:259px;width:103px;height:15px;overflow:hidden"><div class="t" style="left:4px;top:2px;transform:scaleX(0.88);transform-origin:0 0;color:#3333ff">ACERTO CS24 (0 C(</div></div>
<div class="a" style="left:646px;top:259px;width:64px;height:15px;overflow:hidden"><div class="t" style="left:4px;top:2px;transform:scaleX(0.95);transform-origin:0 0;color:#3333ff">08/07/2025</div></div>
<div class="t" style="right:210px;top:261px;transform:scaleX(0.95);transform-origin:100% 0;color:#3333ff">75,00</div>
<div class="t" style="right:153px;top:261px;transform:scaleX(0.95);transform-origin:100% 0;color:#3333ff">75,00</div>
<div class="a" style="left:825px;top:259px;width:64px;height:15px;overflow:hidden"><div class="t" style="left:4px;top:2px;transform:scaleX(0.95);transform-origin:0 0;color:#3333ff">17/07/2025</div></div>
<div class="a" style="left:890px;top:259px;width:72px;height:15px;overflow:hidden"><div class="t" style="left:4px;top:2px;transform:scaleX(0.88);transform-origin:0 0;color:#3333ff">QUITADO</div></div>
<div class="a" style="left:26px;top:275px;width:66px;height:15px;overflow:hidden"><div class="t" style="left:4px;top:2px;transform:scaleX(0.95);transform-origin:0 0;color:#000">27-1/1</div></div>
<div class="a" style="left:93px;top:275px;width:64px;height:15px;overflow:hidden"><div class="t" style="left:4px;top:2px;transform:scaleX(0.95);transform-origin:0 0;color:#000">08/07/2025</div></div>
<div class="a" style="left:158px;top:275px;width:62px;height:15px;overflow:hidden"><div class="t" style="left:4px;top:2px;transform:scaleX(0.88);transform-origin:0 0;color:#000">BOLETO</div></div>
<div class="a" style="left:221px;top:275px;width:14px;height:15px;overflow:hidden"><div class="t" style="left:4px;top:3px;transform:scaleX(0.88);transform-origin:0 0;color:#000">N</div></div>
<div class="a" style="left:236px;top:275px;width:161px;height:15px;overflow:hidden"><div class="t" style="left:4px;top:2px;transform:scaleX(0.88);transform-origin:0 0;color:#000">4 DANIEL PEREIRA COSTA</div></div>
<div class="a" style="left:542px;top:275px;width:103px;height:15px;overflow:hidden"><div class="t" style="left:4px;top:2px;transform:scaleX(0.88);transform-origin:0 0;color:#000">FINALIZAÇÃO DE T</div></div>
<div class="a" style="left:646px;top:275px;width:64px;height:15px;overflow:hidden"><div class="t" style="left:4px;top:2px;transform:scaleX(0.95);transform-origin:0 0;color:#000">10/07/2025</div></div>
<div class="t" style="right:210px;top:277px;transform:scaleX(0.95);transform-origin:100% 0;color:#000">122,55</div>
<div class="t" style="right:153px;top:277px;transform:scaleX(0.95);transform-origin:100% 0;color:#000">122,55</div>
<div class="a" style="left:825px;top:275px;width:64px;height:15px;overflow:hidden"><div class="t" style="left:4px;top:2px;transform:scaleX(0.95);transform-origin:0 0;color:#000">25/07/2025</div></div>
<div class="a" style="left:890px;top:275px;width:72px;height:15px;overflow:hidden"><div class="t" style="left:4px;top:2px;transform:scaleX(0.88);transform-origin:0 0;color:#000">QUITADO</div></div>
<div class="a" style="left:26px;top:291px;width:66px;height:15px;overflow:hidden"><div class="t" style="left:4px;top:2px;transform:scaleX(0.95);transform-origin:0 0;color:#000">79-1/2</div></div>
<div class="a" style="left:93px;top:291px;width:64px;height:15px;overflow:hidden"><div class="t" style="left:4px;top:2px;transform:scaleX(0.95);transform-origin:0 0;color:#000">21/07/2025</div></div>
<div class="a" style="left:158px;top:291px;width:62px;height:15px;overflow:hidden"><div class="t" style="left:4px;top:2px;transform:scaleX(0.88);transform-origin:0 0;color:#000">BOLETO</div></div>
<div class="a" style="left:221px;top:291px;width:14px;height:15px;overflow:hidden"><div class="t" style="left:4px;top:3px;transform:scaleX(0.88);transform-origin:0 0;color:#000">N</div></div>
<div class="a" style="left:236px;top:291px;width:161px;height:15px;overflow:hidden"><div class="t" style="left:4px;top:2px;transform:scaleX(0.88);transform-origin:0 0;color:#000">0 ANA CLARA SILVA</div></div>
<div class="a" style="left:646px;top:291px;width:64px;height:15px;overflow:hidden"><div class="t" style="left:4px;top:2px;transform:scaleX(0.95);transform-origin:0 0;color:#000">21/07/2025</div></div>
<div class="t" style="right:210px;top:293px;transform:scaleX(0.9);transform-origin:100% 0;color:#000">1.200,00</div>
<div class="t" style="right:153px;top:293px;transform:scaleX(0.9);transform-origin:100% 0;color:#000">1.200,00</div>
<div class="a" style="left:825px;top:291px;width:64px;height:15px;overflow:hidden"><div class="t" style="left:4px;top:2px;transform:scaleX(0.95);transform-origin:0 0;color:#000">23/07/2025</div></div>
<div class="a" style="left:890px;top:291px;width:72px;height:15px;overflow:hidden"><div class="t" style="left:4px;top:2px;transform:scaleX(0.88);transform-origin:0 0;color:#000">QUITADO</div></div>
<div class="a" style="left:26px;top:307px;width:66px;height:15px;overflow:hidden"><div class="t" style="left:4px;top:2px;transform:scaleX(0.95);transform-origin:0 0;color:#000">79-2/2</div></div>
<div class="a" style="left:93px;top:307px;width:64px;height:15px;overflow:hidden"><div class="t" style="left:4px;top:2px;transform:scaleX(0.95);transform-origin:0 0;color:#000">21/07/2025</div></div>
<div class="a" style="left:158px;top:307px;width:62px;height:15px;overflow:hidden"><div class="t" style="left:4px;top:2px;transform:scaleX(0.88);transform-origin:0 0;color:#000">BOLETO</div></div>
<div class="a" style="left:221px;top:307px;width:14px;height:15px;overflow:hidden"><div class="t" style="left:4px;top:3px;transform:scaleX(0.88);transform-origin:0 0;color:#000">N</div></div>
<div class="a" style="left:236px;top:307px;width:161px;height:15px;overflow:hidden"><div class="t" style="left:4px;top:2px;transform:scaleX(0.88);transform-origin:0 0;color:#000">0 ANA CLARA SILVA</div></div>
<div class="a" style="left:646px;top:307px;width:64px;height:15px;overflow:hidden"><div class="t" style="left:4px;top:2px;transform:scaleX(0.95);transform-origin:0 0;color:#000">21/07/2025</div></div>
<div class="t" style="right:210px;top:309px;transform:scaleX(0.9);transform-origin:100% 0;color:#000">1.200,00</div>
<div class="a" style="left:890px;top:307px;width:72px;height:15px;overflow:hidden"><div class="t" style="left:4px;top:2px;transform:scaleX(0.88);transform-origin:0 0;color:#000">CANCELADO</div></div>
<div class="a" style="left:26px;top:323px;width:66px;height:15px;overflow:hidden"><div class="t" style="left:4px;top:2px;transform:scaleX(0.95);transform-origin:0 0;color:#000">53-1/4</div></div>
<div class="a" style="left:93px;top:323px;width:64px;height:15px;overflow:hidden"><div class="t" style="left:4px;top:2px;transform:scaleX(0.95);transform-origin:0 0;color:#000">15/07/2025</div></div>
<div class="a" style="left:158px;top:323px;width:62px;height:15px;overflow:hidden"><div class="t" style="left:4px;top:2px;transform:scaleX(0.88);transform-origin:0 0;color:#000">BOLETO</div></div>
<div class="a" style="left:221px;top:323px;width:14px;height:15px;overflow:hidden"><div class="t" style="left:4px;top:3px;transform:scaleX(0.88);transform-origin:0 0;color:#000">N</div></div>
<div class="a" style="left:236px;top:323px;width:161px;height:15px;overflow:hidden"><div class="t" style="left:4px;top:2px;transform:scaleX(0.88);transform-origin:0 0;color:#000">4 DANIEL PEREIRA COSTA</div></div>
<div class="a" style="left:542px;top:323px;width:103px;height:15px;overflow:hidden"><div class="t" style="left:4px;top:2px;transform:scaleX(0.88);transform-origin:0 0;color:#000">ACERTO CS2 (0 CO</div></div>
<div class="a" style="left:646px;top:323px;width:64px;height:15px;overflow:hidden"><div class="t" style="left:4px;top:2px;transform:scaleX(0.95);transform-origin:0 0;color:#000">27/07/2025</div></div>
<div class="t" style="right:210px;top:325px;transform:scaleX(0.95);transform-origin:100% 0;color:#000">29,29</div>
<div class="a" style="left:890px;top:323px;width:72px;height:15px;overflow:hidden"><div class="t" style="left:4px;top:2px;transform:scaleX(0.88);transform-origin:0 0;color:#000">PENDENTE</div></div>
<div class="a" style="left:26px;top:339px;width:66px;height:15px;overflow:hidden"><div class="t" style="left:4px;top:2px;transform:scaleX(0.95);transform-origin:0 0;color:#008000">18-1/1</div></div>
<div class="a" style="left:93px;top:339px;width:64px;height:15px;overflow:hidden"><div class="t" style="left:4px;top:2px;transform:scaleX(0.95);transform-origin:0 0;color:#008000">11/07/2025</div></div>
<div class="a" style="left:158px;top:339px;width:62px;height:15px;overflow:hidden"><div class="t" style="left:4px;top:2px;transform:scaleX(0.88);transform-origin:0 0;color:#008000">BOLETO</div></div>
<div class="a" style="left:221px;top:339px;width:14px;height:15px;overflow:hidden"><div class="t" style="left:4px;top:3px;transform:scaleX(0.88);transform-origin:0 0;color:#008000">N</div></div>
<div class="a" style="left:236px;top:339px;width:161px;height:15px;overflow:hidden"><div class="t" style="left:4px;top:2px;transform:scaleX(0.88);transform-origin:0 0;color:#008000">0 ANA CLARA SILVA</div></div>
<div class="a" style="left:398px;top:339px;width:78px;height:15px;overflow:hidden"><div class="t" style="left:4px;top:2px;transform:scaleX(0.88);transform-origin:0 0;color:#008000">1 BANCO DO E</div></div>
<div class="a" style="left:646px;top:339px;width:64px;height:15px;overflow:hidden"><div class="t" style="left:4px;top:2px;transform:scaleX(0.95);transform-origin:0 0;color:#008000">28/07/2025</div></div>
<div class="t" style="right:210px;top:341px;transform:scaleX(0.95);transform-origin:100% 0;color:#008000">105,50</div>
<div class="a" style="left:890px;top:339px;width:72px;height:15px;overflow:hidden"><div class="t" style="left:4px;top:2px;transform:scaleX(0.88);transform-origin:0 0;color:#008000">PENDENTE</div></div>
<div class="a" style="left:26px;top:355px;width:66px;height:15px;overflow:hidden"><div class="t" style="left:4px;top:2px;transform:scaleX(0.95);transform-origin:0 0;color:#008000">54-1/4</div></div>
<div class="a" style="left:93px;top:355px;width:64px;height:15px;overflow:hidden"><div class="t" style="left:4px;top:2px;transform:scaleX(0.95);transform-origin:0 0;color:#008000">15/07/2025</div></div>
<div class="a" style="left:158px;top:355px;width:62px;height:15px;overflow:hidden"><div class="t" style="left:4px;top:2px;transform:scaleX(0.88);transform-origin:0 0;color:#008000">BOLETO</div></div>
<div class="a" style="left:221px;top:355px;width:14px;height:15px;overflow:hidden"><div class="t" style="left:4px;top:3px;transform:scaleX(0.88);transform-origin:0 0;color:#008000">N</div></div>
<div class="a" style="left:236px;top:355px;width:161px;height:15px;overflow:hidden"><div class="t" style="left:4px;top:2px;transform:scaleX(0.88);transform-origin:0 0;color:#008000">3 CAMILA OLIVEIRA SANTOS</div></div>
<div class="a" style="left:477px;top:355px;width:64px;height:15px;overflow:hidden"><div class="t" style="left:4px;top:2px;transform:scaleX(0.88);transform-origin:0 0;color:#008000">AB</div></div>
<div class="a" style="left:542px;top:355px;width:103px;height:15px;overflow:hidden"><div class="t" style="left:4px;top:2px;transform:scaleX(0.88);transform-origin:0 0;color:#008000">ACERTO CS25 (0 C(</div></div>
<div class="a" style="left:646px;top:355px;width:64px;height:15px;overflow:hidden"><div class="t" style="left:4px;top:2px;transform:scaleX(0.95);transform-origin:0 0;color:#008000">30/07/2025</div></div>
<div class="t" style="right:210px;top:357px;transform:scaleX(0.95);transform-origin:100% 0;color:#008000">27,14</div>
<div class="a" style="left:890px;top:355px;width:72px;height:15px;overflow:hidden"><div class="t" style="left:4px;top:2px;transform:scaleX(0.88);transform-origin:0 0;color:#008000">PENDENTE</div></div>
<div class="a" style="left:26px;top:371px;width:66px;height:15px;overflow:hidden"><div class="t" style="left:4px;top:2px;transform:scaleX(0.95);transform-origin:0 0;color:#c40000">53-2/4</div></div>
<div class="a" style="left:93px;top:371px;width:64px;height:15px;overflow:hidden"><div class="t" style="left:4px;top:2px;transform:scaleX(0.95);transform-origin:0 0;color:#c40000">15/07/2025</div></div>
<div class="a" style="left:158px;top:371px;width:62px;height:15px;overflow:hidden"><div class="t" style="left:4px;top:2px;transform:scaleX(0.88);transform-origin:0 0;color:#c40000">BOLETO</div></div>
<div class="a" style="left:221px;top:371px;width:14px;height:15px;overflow:hidden"><div class="t" style="left:4px;top:3px;transform:scaleX(0.88);transform-origin:0 0;color:#c40000">N</div></div>
<div class="a" style="left:236px;top:371px;width:161px;height:15px;overflow:hidden"><div class="t" style="left:4px;top:2px;transform:scaleX(0.88);transform-origin:0 0;color:#c40000">4 DANIEL PEREIRA COSTA</div></div>
<div class="a" style="left:542px;top:371px;width:103px;height:15px;overflow:hidden"><div class="t" style="left:4px;top:2px;transform:scaleX(0.88);transform-origin:0 0;color:#c40000">ACERTO CS2 (0 CO</div></div>
<div class="a" style="left:646px;top:371px;width:64px;height:15px;overflow:hidden"><div class="t" style="left:4px;top:2px;transform:scaleX(0.95);transform-origin:0 0;color:#c40000">08/08/2025</div></div>
<div class="t" style="right:210px;top:373px;transform:scaleX(0.95);transform-origin:100% 0;color:#c40000">27,82</div>
<div class="a" style="left:890px;top:371px;width:72px;height:15px;overflow:hidden"><div class="t" style="left:4px;top:2px;transform:scaleX(0.88);transform-origin:0 0;color:#c40000">CANCELADO</div></div>
<div class="a" style="left:26px;top:387px;width:66px;height:15px;overflow:hidden"><div class="t" style="left:4px;top:2px;transform:scaleX(0.95);transform-origin:0 0;color:#008000">53-3/4</div></div>
<div class="a" style="left:93px;top:387px;width:64px;height:15px;overflow:hidden"><div class="t" style="left:4px;top:2px;transform:scaleX(0.95);transform-origin:0 0;color:#008000">15/07/2025</div></div>
<div class="a" style="left:158px;top:387px;width:62px;height:15px;overflow:hidden"><div class="t" style="left:4px;top:2px;transform:scaleX(0.88);transform-origin:0 0;color:#008000">BOLETO</div></div>
<div class="a" style="left:221px;top:387px;width:14px;height:15px;overflow:hidden"><div class="t" style="left:4px;top:3px;transform:scaleX(0.88);transform-origin:0 0;color:#008000">N</div></div>
<div class="a" style="left:236px;top:387px;width:161px;height:15px;overflow:hidden"><div class="t" style="left:4px;top:2px;transform:scaleX(0.88);transform-origin:0 0;color:#008000">4 DANIEL PEREIRA COSTA</div></div>
<div class="a" style="left:542px;top:387px;width:103px;height:15px;overflow:hidden"><div class="t" style="left:4px;top:2px;transform:scaleX(0.88);transform-origin:0 0;color:#008000">ACERTO CS2 (0 CO</div></div>
<div class="a" style="left:646px;top:387px;width:64px;height:15px;overflow:hidden"><div class="t" style="left:4px;top:2px;transform:scaleX(0.95);transform-origin:0 0;color:#008000">28/08/2025</div></div>
<div class="t" style="right:210px;top:389px;transform:scaleX(0.95);transform-origin:100% 0;color:#008000">27,82</div>
<div class="t" style="right:153px;top:389px;transform:scaleX(0.95);transform-origin:100% 0;color:#008000">27,82</div>
<div class="a" style="left:825px;top:387px;width:64px;height:15px;overflow:hidden"><div class="t" style="left:4px;top:2px;transform:scaleX(0.95);transform-origin:0 0;color:#008000">23/07/2025</div></div>
<div class="a" style="left:890px;top:387px;width:72px;height:15px;overflow:hidden"><div class="t" style="left:4px;top:2px;transform:scaleX(0.88);transform-origin:0 0;color:#008000">QUITADO</div></div>
<div class="a" style="left:26px;top:403px;width:66px;height:15px;overflow:hidden"><div class="t" style="left:4px;top:2px;transform:scaleX(0.95);transform-origin:0 0;color:#000">53-4/4</div></div>
<div class="a" style="left:93px;top:403px;width:64px;height:15px;overflow:hidden"><div class="t" style="left:4px;top:2px;transform:scaleX(0.95);transform-origin:0 0;color:#000">15/07/2025</div></div>
<div class="a" style="left:158px;top:403px;width:62px;height:15px;overflow:hidden"><div class="t" style="left:4px;top:2px;transform:scaleX(0.88);transform-origin:0 0;color:#000">BOLETO</div></div>
<div class="a" style="left:221px;top:403px;width:14px;height:15px;overflow:hidden"><div class="t" style="left:4px;top:3px;transform:scaleX(0.88);transform-origin:0 0;color:#000">N</div></div>
<div class="a" style="left:236px;top:403px;width:161px;height:15px;overflow:hidden"><div class="t" style="left:4px;top:2px;transform:scaleX(0.88);transform-origin:0 0;color:#000">4 DANIEL PEREIRA COSTA</div></div>
<div class="a" style="left:542px;top:403px;width:103px;height:15px;overflow:hidden"><div class="t" style="left:4px;top:2px;transform:scaleX(0.88);transform-origin:0 0;color:#000">ACERTO CS2 (0 CO</div></div>
<div class="a" style="left:646px;top:403px;width:64px;height:15px;overflow:hidden"><div class="t" style="left:4px;top:2px;transform:scaleX(0.95);transform-origin:0 0;color:#000">17/09/2025</div></div>
<div class="t" style="right:210px;top:405px;transform:scaleX(0.95);transform-origin:100% 0;color:#000">27,82</div>
<div class="t" style="right:153px;top:405px;transform:scaleX(0.95);transform-origin:100% 0;color:#000">27,82</div>
<div class="a" style="left:825px;top:403px;width:64px;height:15px;overflow:hidden"><div class="t" style="left:4px;top:2px;transform:scaleX(0.95);transform-origin:0 0;color:#000">23/07/2025</div></div>
<div class="a" style="left:890px;top:403px;width:72px;height:15px;overflow:hidden"><div class="t" style="left:4px;top:2px;transform:scaleX(0.88);transform-origin:0 0;color:#000">QUITADO</div></div>
<div class="a " style="left:12px;top:565px;width:951px;height:1px;background:#fff"></div>
<div class="a " style="left:12px;top:566px;width:951px;height:16px;background:#f0f0f0"></div>
<div class="a " style="left:29px;top:566px;width:17px;height:15px;background:#cdcdcd"></div>
<svg class="a" style="left:17px;top:570px" width="7" height="8" viewBox="0 0 7 8"><path d="M5.5 0.8 L1.8 4 L5.5 7.2" fill="none" stroke="#606060" stroke-width="1.8"/></svg>
<svg class="a" style="left:951px;top:570px" width="7" height="8" viewBox="0 0 7 8"><path d="M1.5 0.8 L5.2 4 L1.5 7.2" fill="none" stroke="#606060" stroke-width="1.8"/></svg>
<div class="a " style="left:11px;top:582px;width:149px;height:15px;border:1px solid #646464;background:#f0f0f0"></div>
<div class="t" style="left:12px;top:584px;transform:scaleX(0.9);transform-origin:0 0;">Quantidade:</div>
<div class="t" style="right:818px;top:584px;transform:scaleX(1.0);transform-origin:100% 0;color:#0000ff;font-weight:bold;letter-spacing:1px">0 / 13</div>
<div class="a " style="left:715px;top:582px;width:249px;height:15px;border:1px solid #646464;background:#f0f0f0"></div>
<div class="t" style="left:717px;top:584px;transform:scaleX(0.9);transform-origin:0 0;">Total:</div>
<div class="t" style="right:19px;top:584px;transform:scaleX(1.0);transform-origin:100% 0;color:#0000ff;font-weight:bold;letter-spacing:0.75px">0,00 / 2.919,14</div>
<div class="a " style="left:11px;top:602px;width:112px;height:20px;background:#f0f0f0;border-style:solid;border-width:1px;border-color:#fff #696969 #696969 #fff;box-shadow:inset 1px 1px 0 #e3e3e3, inset -1px -1px 0 #a0a0a0;"></div>
<div class="t" style="left:11px;width:112px;top:607px;text-align:center"><span style="display:inline-block;transform:scaleX(0.9)">BAIXAR</span></div>
<div class="a " style="left:123px;top:602px;width:112px;height:20px;background:#f0f0f0;border-style:solid;border-width:1px;border-color:#fff #696969 #696969 #fff;box-shadow:inset 1px 1px 0 #e3e3e3, inset -1px -1px 0 #a0a0a0;"></div>
<div class="t" style="left:123px;width:112px;top:607px;text-align:center"><span style="display:inline-block;transform:scaleX(0.9)">CANCELAR</span></div>
<div class="a " style="left:235px;top:602px;width:112px;height:20px;background:#f0f0f0;border-style:solid;border-width:1px;border-color:#fff #696969 #696969 #fff;box-shadow:inset 1px 1px 0 #e3e3e3, inset -1px -1px 0 #a0a0a0;"></div>
<div class="t" style="left:235px;width:112px;top:607px;text-align:center"><span style="display:inline-block;transform:scaleX(0.9)">ESTORNAR</span></div>
<div class="a " style="left:347px;top:602px;width:121px;height:20px;background:#f0f0f0;border-style:solid;border-width:1px;border-color:#fff #696969 #696969 #fff;box-shadow:inset 1px 1px 0 #e3e3e3, inset -1px -1px 0 #a0a0a0;"></div>
<div class="t" style="left:347px;width:121px;top:607px;text-align:center"><span style="display:inline-block;transform:scaleX(0.9)">AJUSTAR</span></div>
<div class="a " style="left:475px;top:602px;width:120px;height:20px;background:#f0f0f0;border-style:solid;border-width:1px;border-color:#fff #696969 #696969 #fff;box-shadow:inset 1px 1px 0 #e3e3e3, inset -1px -1px 0 #a0a0a0;"></div>
<div class="t" style="left:475px;width:120px;top:607px;text-align:center"><span style="display:inline-block;transform:scaleX(0.9)">REIMPRIMIR</span></div>
<div class="a " style="left:595px;top:602px;width:121px;height:20px;background:#f0f0f0;border-style:solid;border-width:1px;border-color:#fff #696969 #696969 #fff;box-shadow:inset 1px 1px 0 #e3e3e3, inset -1px -1px 0 #a0a0a0;"></div>
<div class="t" style="left:595px;width:121px;top:607px;text-align:center"><span style="display:inline-block;transform:scaleX(0.9)">RENEGOCIAR</span></div>
<div class="a " style="left:723px;top:602px;width:120px;height:20px;background:#f0f0f0;border-style:solid;border-width:1px;border-color:#fff #696969 #696969 #fff;box-shadow:inset 1px 1px 0 #e3e3e3, inset -1px -1px 0 #a0a0a0;"></div>
<div class="t" style="left:723px;width:120px;top:607px;text-align:center"><span style="display:inline-block;transform:scaleX(0.9)">REMESSA</span></div>
<div class="a " style="left:843px;top:602px;width:121px;height:20px;background:#f0f0f0;border-style:solid;border-width:1px;border-color:#fff #696969 #696969 #fff;box-shadow:inset 1px 1px 0 #e3e3e3, inset -1px -1px 0 #a0a0a0;"></div>
<div class="t" style="left:843px;width:121px;top:607px;text-align:center"><span style="display:inline-block;transform:scaleX(0.9)">RETORNO</span></div>
</body></html>
